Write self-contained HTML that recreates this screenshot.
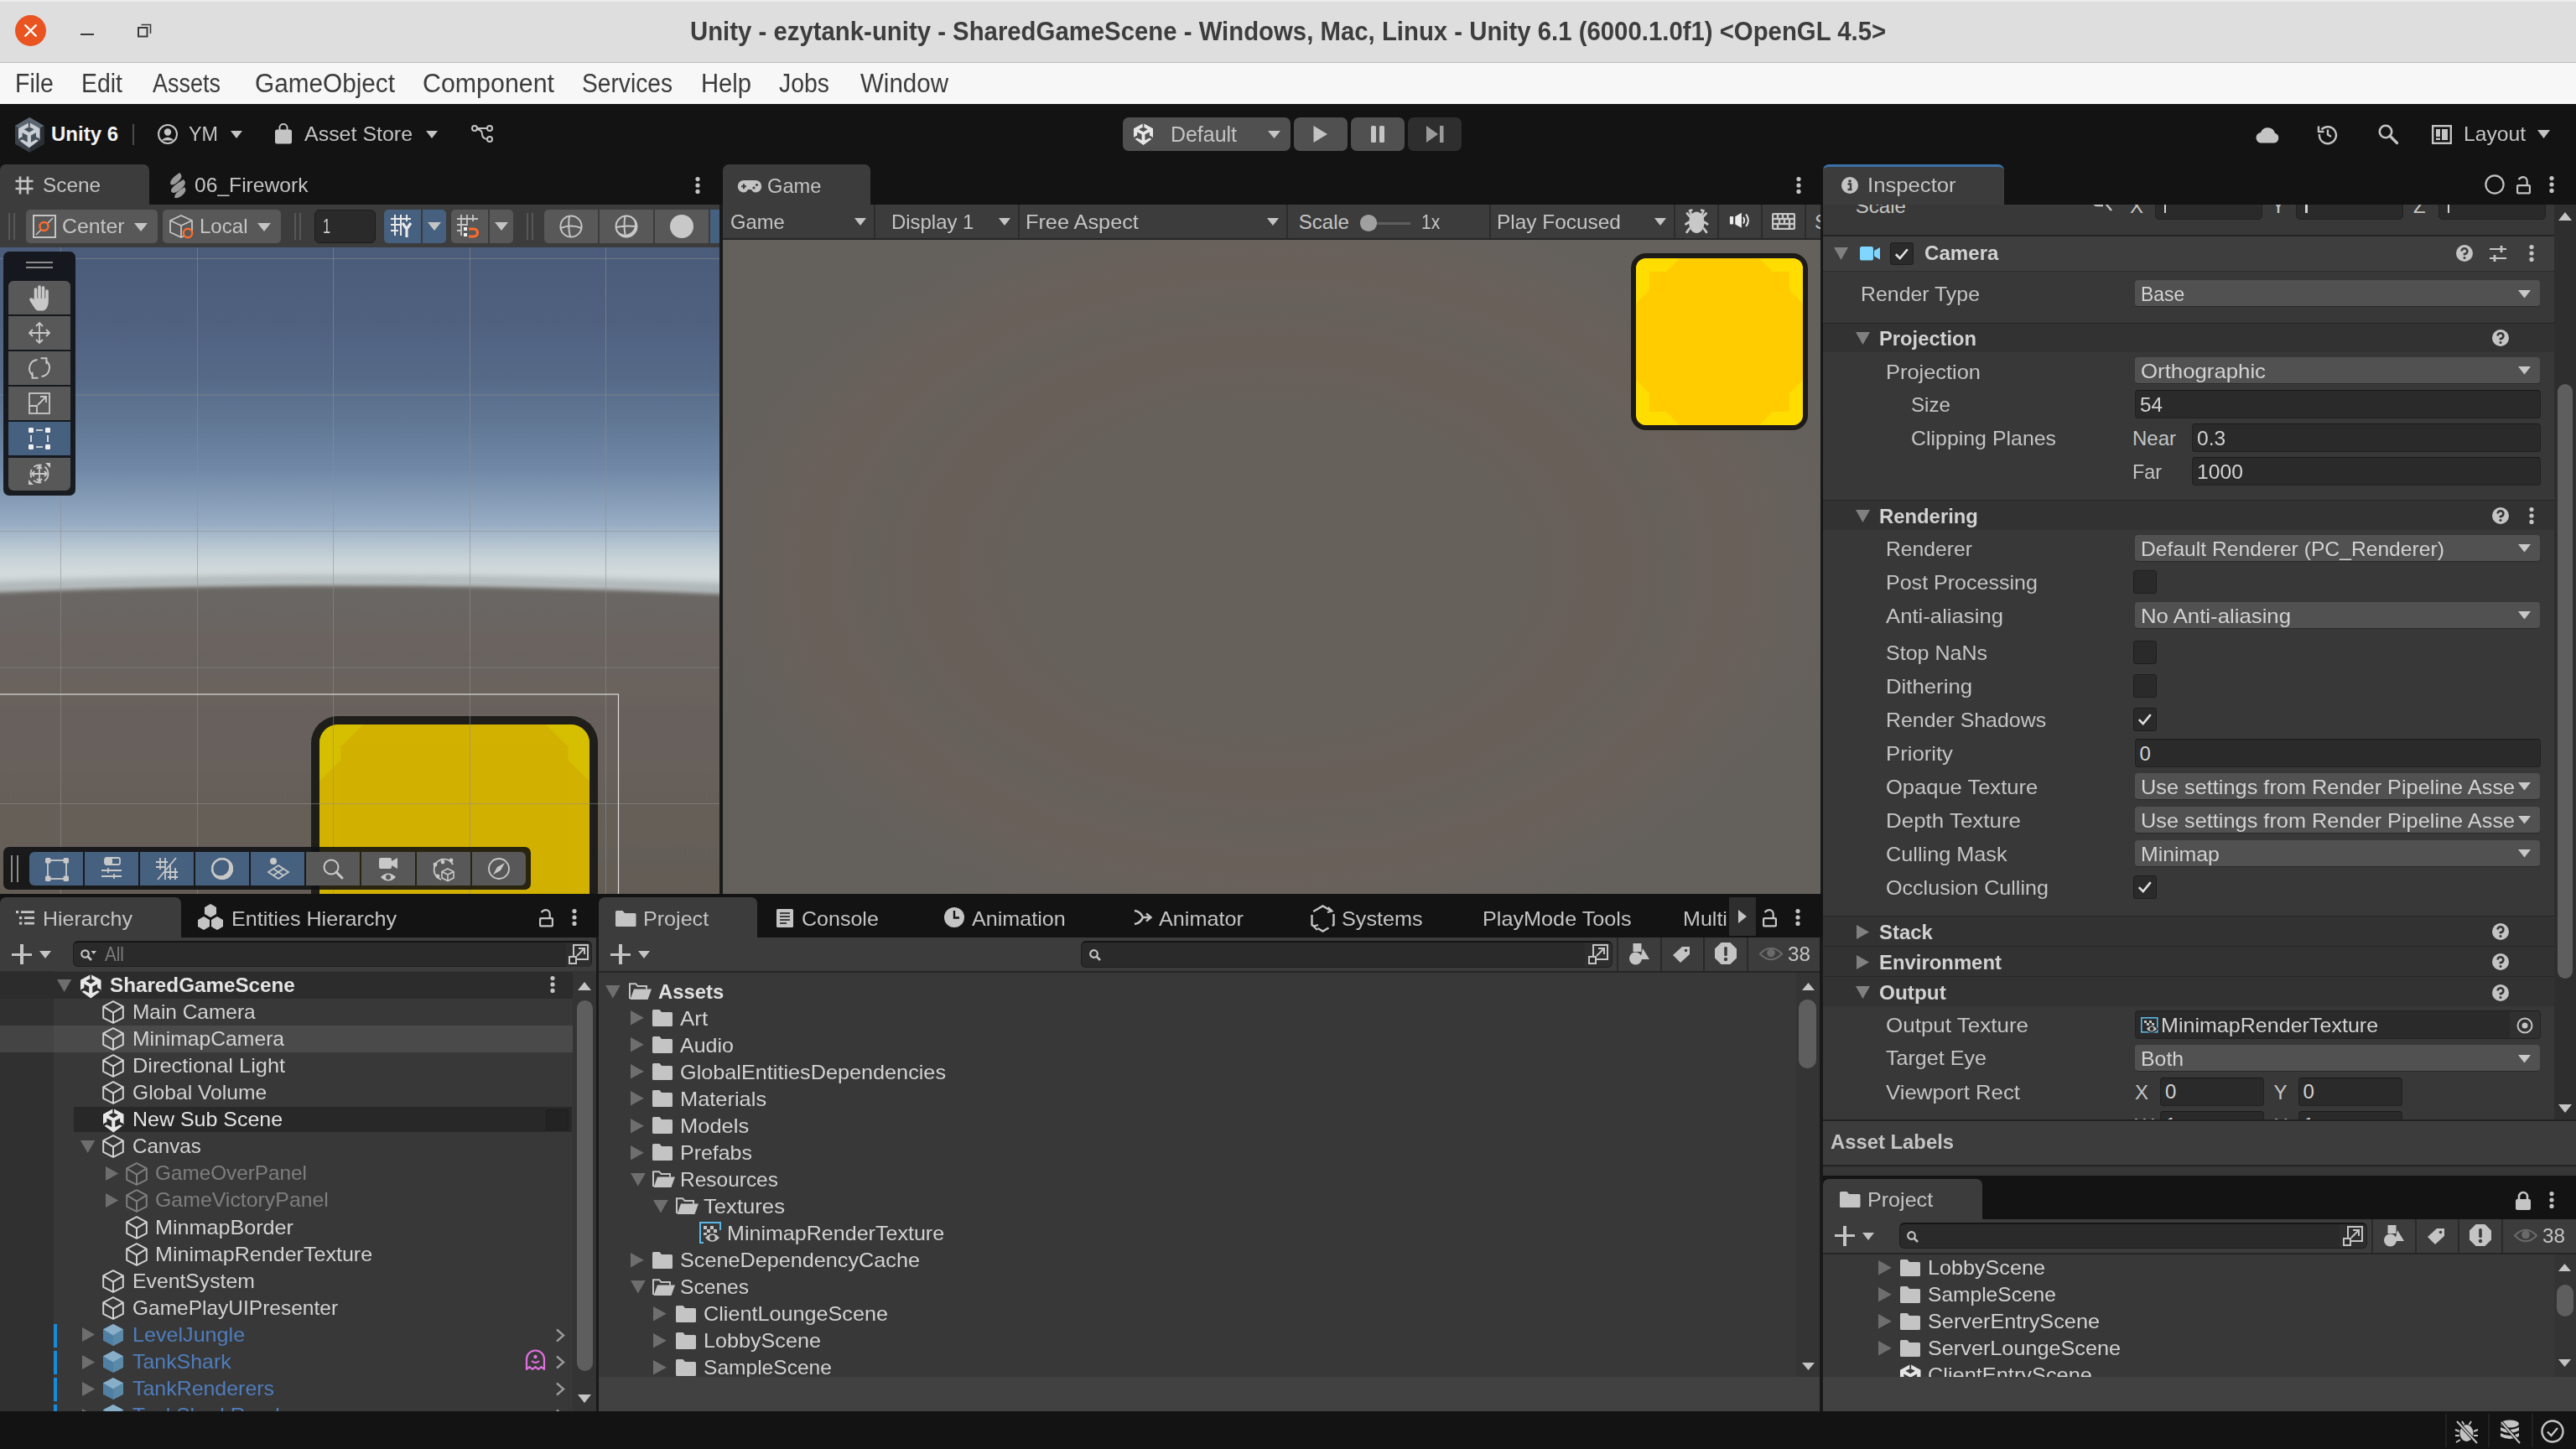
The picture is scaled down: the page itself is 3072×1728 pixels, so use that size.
<!DOCTYPE html>
<html><head><meta charset="utf-8">
<style>
*{box-sizing:border-box;margin:0;padding:0}
html,body{width:3072px;height:1728px;overflow:hidden;background:#131313;font-family:"Liberation Sans",sans-serif;color:#c8c8c8;position:relative}
.a{position:absolute}
.t{position:absolute;white-space:nowrap;line-height:1}
svg{position:absolute;overflow:visible}
</style></head><body>
<div class="a" style="left:0.0px;top:0.0px;width:3072.0px;height:74.5px;background:#dedede;border-top:2px solid #ececec;border-bottom:1.5px solid #bdbdbd"></div>
<div class="a" style="left:18.0px;top:18.0px;width:37.0px;height:37.0px;background:#e95420;border-radius:50%;"></div>
<svg style="left:18px;top:18px;" width="37" height="37" viewBox="0 0 37 37"><path d="M11.5 11.5 L25.5 25.5 M25.5 11.5 L11.5 25.5" stroke="#fff" stroke-width="2.4"/></svg>
<div class="a" style="left:96.0px;top:40.0px;width:16.0px;height:2.0px;background:#3a3a3a;"></div>
<svg style="left:160px;top:24px;" width="30" height="24" viewBox="0 0 30 24"><rect x="5" y="9" width="10.5" height="10.5" fill="none" stroke="#3a3a3a" stroke-width="2"/><path d="M8.5 5.5 H19.5 V16" fill="none" stroke="#3a3a3a" stroke-width="1.6"/></svg>
<div class="t" style="left:823.0px;top:22.1px;font-size:30.5px;color:#3d3d3d;font-weight:bold;transform:scaleX(0.9622);transform-origin:0.00px 0;">Unity - ezytank-unity - SharedGameScene - Windows, Mac, Linux - Unity 6.1 (6000.1.0f1) &lt;OpenGL 4.5&gt;</div>
<div class="a" style="left:0.0px;top:74.5px;width:3072.0px;height:49.5px;background:#f7f7f7;"></div>
<div class="t" style="left:17.5px;top:83.9px;font-size:31px;color:#3c3c3c;transform:scaleX(0.9200);transform-origin:0.00px 0;">File</div>
<div class="t" style="left:97.0px;top:83.9px;font-size:31px;color:#3c3c3c;transform:scaleX(0.9159);transform-origin:0.00px 0;">Edit</div>
<div class="t" style="left:182.0px;top:83.9px;font-size:31px;color:#3c3c3c;transform:scaleX(0.8710);transform-origin:0.00px 0;">Assets</div>
<div class="t" style="left:304.0px;top:83.9px;font-size:31px;color:#3c3c3c;transform:scaleX(0.9598);transform-origin:0.00px 0;">GameObject</div>
<div class="t" style="left:504.0px;top:83.9px;font-size:31px;color:#3c3c3c;transform:scaleX(0.9797);transform-origin:0.00px 0;">Component</div>
<div class="t" style="left:694.0px;top:83.9px;font-size:31px;color:#3c3c3c;transform:scaleX(0.9095);transform-origin:0.00px 0;">Services</div>
<div class="t" style="left:836.0px;top:83.9px;font-size:31px;color:#3c3c3c;transform:scaleX(0.9412);transform-origin:0.00px 0;">Help</div>
<div class="t" style="left:929.0px;top:83.9px;font-size:31px;color:#3c3c3c;transform:scaleX(0.9160);transform-origin:0.00px 0;">Jobs</div>
<div class="t" style="left:1026.0px;top:83.9px;font-size:31px;color:#3c3c3c;transform:scaleX(0.9524);transform-origin:0.00px 0;">Window</div>
<div class="a" style="left:0.0px;top:124.0px;width:3072.0px;height:72.0px;background:#131313;"></div>
<svg style="left:17.9px;top:140.1px;" width="34.5" height="41.8" viewBox="0 0 34.5 41.8"><path d="M17.25 0 L34.5 10 V31.8 L17.25 41.8 L0 31.8 V10 Z" fill="#3a4149"/><path d="M17.25 0 L34.5 10 L17.25 20 L0 10 Z" fill="#5b6670"/><path d="M17.25 20 L34.5 10 V31.8 L17.25 41.8 Z" fill="#2a3036"/></svg>
<svg style="left:22.4px;top:146.2px;" width="25.6" height="30.2" viewBox="0 0 25.6 30.2"><g transform="scale(1.0449,1.0559)"><path d="M12.25 0 L24.5 6.8 V19.6 L12.25 28.6 L0 19.6 V6.8 Z" fill="#c9cdd4"/><rect x="11.35" y="-0.5" width="1.8" height="5.6" fill="#46505a"/><path d="M6.3 7.9 L12.25 4.9 L17.9 7.9 L12.25 11.2 Z" fill="#46505a"/><path d="M4.4 11.5 L10.2 14.6 V22.4 L4.4 19.2 L0.2 21.6 V18.4 L4.4 16 Z" fill="#46505a"/><path d="M20.1 11.5 L14.3 14.6 V22.4 L20.1 19.2 L24.3 21.6 V18.4 L20.1 16 Z" fill="#46505a"/></g></svg>
<div class="t" style="left:61.0px;top:147.9px;font-size:24px;color:#f2f2f2;font-weight:bold;transform:scaleX(1.0000);transform-origin:0.00px 0;">Unity 6</div>
<div class="a" style="left:158.0px;top:148.0px;width:2.0px;height:25.0px;background:#4a4a4a;"></div>
<svg style="left:188px;top:148px;" width="24" height="24" viewBox="0 0 24 24"><circle cx="12" cy="12" r="11" fill="none" stroke="#c4c4c4" stroke-width="2"/><circle cx="12" cy="9.5" r="4.2" fill="#c4c4c4"/><path d="M4.5 19.5 Q12 12 19.5 19.5" fill="#c4c4c4"/></svg>
<div class="t" style="left:225.0px;top:147.9px;font-size:24px;color:#c4c4c4;transform:scaleX(0.9722);transform-origin:0.00px 0;">YM</div>
<svg style="left:275.0px;top:156.0px;" width="14" height="9" viewBox="0 0 14 9"><path d="M0 0 H14 L7.0 9 Z" fill="#c4c4c4"/></svg>
<svg style="left:328px;top:148px;" width="20" height="24" viewBox="0 0 20 24"><path d="M5.5 7 V4 A4.5 4 0 0 1 14.5 4 V7" fill="none" stroke="#c4c4c4" stroke-width="2"/><rect x="0" y="6.5" width="20" height="17" rx="2.5" fill="#c4c4c4"/></svg>
<div class="t" style="left:363.4px;top:147.9px;font-size:24px;color:#c4c4c4;transform:scaleX(1.0403);transform-origin:0.00px 0;">Asset Store</div>
<svg style="left:508.0px;top:156.0px;" width="14" height="9" viewBox="0 0 14 9"><path d="M0 0 H14 L7.0 9 Z" fill="#c4c4c4"/></svg>
<svg style="left:562px;top:149px;" width="26" height="21" viewBox="0 0 26 21"><circle cx="4" cy="4" r="3" fill="none" stroke="#c4c4c4" stroke-width="2"/><circle cx="22" cy="4" r="3" fill="none" stroke="#c4c4c4" stroke-width="2"/><circle cx="22" cy="17" r="3" fill="none" stroke="#c4c4c4" stroke-width="2"/><path d="M7 4 H19 M7 5 Q13 6 13 11 Q13 16 19 17" fill="none" stroke="#c4c4c4" stroke-width="2"/></svg>
<div class="a" style="left:1339.0px;top:140.0px;width:200.0px;height:40.0px;background:#505050;border-radius:7px;"></div>
<svg style="left:1352px;top:146.7px;" width="23" height="26" viewBox="0 0 23 26"><g transform="scale(0.9388,0.9091)"><path d="M12.25 0 L24.5 6.8 V19.6 L12.25 28.6 L0 19.6 V6.8 Z" fill="#e6e6e6"/><rect x="11.35" y="-0.5" width="1.8" height="5.6" fill="#505050"/><path d="M6.3 7.9 L12.25 4.9 L17.9 7.9 L12.25 11.2 Z" fill="#505050"/><path d="M4.4 11.5 L10.2 14.6 V22.4 L4.4 19.2 L0.2 21.6 V18.4 L4.4 16 Z" fill="#505050"/><path d="M20.1 11.5 L14.3 14.6 V22.4 L20.1 19.2 L24.3 21.6 V18.4 L20.1 16 Z" fill="#505050"/></g></svg>
<div class="t" style="left:1396.3px;top:147.8px;font-size:25px;color:#c4c4c4;transform:scaleX(0.9968);transform-origin:0.00px 0;">Default</div>
<svg style="left:1511.5px;top:156.0px;" width="15" height="9" viewBox="0 0 15 9"><path d="M0 0 H15 L7.5 9 Z" fill="#c4c4c4"/></svg>
<div class="a" style="left:1543.0px;top:140.0px;width:64.0px;height:40.0px;background:#505050;border-radius:7px;"></div>
<svg style="left:1566px;top:150px;" width="18" height="20" viewBox="0 0 18 20"><path d="M0.5 0 V20 L17 10 Z" fill="#c4c4c4"/></svg>
<div class="a" style="left:1611.0px;top:140.0px;width:64.0px;height:40.0px;background:#505050;border-radius:7px;"></div>
<div class="a" style="left:1635.0px;top:150.0px;width:6.0px;height:20.0px;background:#c4c4c4;border-radius:1.5px;"></div>
<div class="a" style="left:1644.5px;top:150.0px;width:6.5px;height:20.0px;background:#c4c4c4;border-radius:1.5px;"></div>
<div class="a" style="left:1679.0px;top:140.0px;width:64.0px;height:40.0px;background:#2e2e2e;border-radius:7px;"></div>
<svg style="left:1701px;top:150px;" width="21" height="20" viewBox="0 0 21 20"><path d="M0 0 V20 L14 10 Z" fill="#9a9a9a"/><rect x="16" y="0" width="4.5" height="20" fill="#9a9a9a"/></svg>
<svg style="left:2690px;top:150px;" width="28" height="21" viewBox="0 0 28 21"><path d="M6 20.5 H22 A6 6 0 0 0 23 8.8 A9 9 0 0 0 6 8 A6.3 6.3 0 0 0 6 20.5 Z" fill="#c4c4c4"/></svg>
<svg style="left:2764px;top:148px;" width="24" height="24" viewBox="0 0 24 24"><path d="M4.5 6.5 A10 10 0 1 1 2 12" fill="none" stroke="#c4c4c4" stroke-width="2.4"/><path d="M1 2.5 V9 H7.5" fill="none" stroke="#c4c4c4" stroke-width="2.4"/><path d="M12 6.5 V12.5 L16 15" fill="none" stroke="#c4c4c4" stroke-width="2.4"/></svg>
<svg style="left:2836px;top:148px;" width="24" height="24" viewBox="0 0 24 24"><circle cx="9" cy="9" r="7.2" fill="none" stroke="#c4c4c4" stroke-width="2.6"/><path d="M14 14 L22.5 22.5" stroke="#c4c4c4" stroke-width="3.2" stroke-linecap="round"/></svg>
<svg style="left:2900px;top:149px;" width="24" height="23" viewBox="0 0 24 23"><rect x="1.2" y="1.2" width="21.6" height="20.6" fill="none" stroke="#c4c4c4" stroke-width="2.4"/><rect x="5" y="5" width="5" height="9" fill="#c4c4c4"/><rect x="12" y="5" width="7" height="13" fill="#c4c4c4"/><rect x="5" y="15.5" width="5" height="2.5" fill="#c4c4c4"/></svg>
<div class="t" style="left:2938.0px;top:148.3px;font-size:24px;color:#c4c4c4;transform:scaleX(1.0278);transform-origin:0.00px 0;">Layout</div>
<svg style="left:3026.0px;top:155.0px;" width="15" height="10" viewBox="0 0 15 10"><path d="M0 0 H15 L7.5 10 Z" fill="#c4c4c4"/></svg>
<div class="a" style="left:0.0px;top:196.0px;width:178.0px;height:48.0px;background:#3c3c3c;border-radius:7px 7px 0 0;"></div>
<svg style="left:18px;top:210px;" width="22" height="22" viewBox="0 0 22 22"><path d="M6 0.5 V21.5 M15 0.5 V21.5 M0.5 6 H21.5 M0.5 15 H21.5" stroke="#c4c4c4" stroke-width="2.6"/></svg>
<div class="t" style="left:51.0px;top:209.4px;font-size:24px;color:#c4c4c4;transform:scaleX(1.0147);transform-origin:0.00px 0;">Scene</div>
<svg style="left:200px;top:205px;" width="23" height="31" viewBox="0 0 23 31"><path d="M14 1 Q20 5 12 12 Q5 18 3 14 Q2 9 14 1 Z M19 9 Q24 14 15 21 Q6 28 4 23 Q3 18 19 9 Z M20 18 Q24 23 16 29 Q9 33 8 30 Q8 25 20 18 Z" fill="#9a9a9a"/></svg>
<div class="t" style="left:232.0px;top:209.4px;font-size:24px;color:#c4c4c4;transform:scaleX(1.0261);transform-origin:0.00px 0;">06_Firework</div>
<svg style="left:827.6px;top:208.7px;" width="8" height="24" viewBox="0 0 8 24"><circle cx="4" cy="4.6" r="2.6" fill="#c4c4c4"/><circle cx="4" cy="12" r="2.6" fill="#c4c4c4"/><circle cx="4" cy="19.4" r="2.6" fill="#c4c4c4"/></svg>
<div class="a" style="left:0.0px;top:244.0px;width:858.0px;height:51.0px;background:#3c3c3c;"></div>
<div class="a" style="left:9.5px;top:254.0px;width:2.0px;height:32.0px;background:#575757;"></div>
<div class="a" style="left:16.0px;top:254.0px;width:2.0px;height:32.0px;background:#575757;"></div>
<div class="a" style="left:31.0px;top:250.3px;width:157.0px;height:39.7px;background:#585858;border-radius:5px;"></div>
<svg style="left:39px;top:256px;" width="28" height="28" viewBox="0 0 28 28"><rect x="1" y="1" width="26" height="26" fill="none" stroke="#c4c4c4" stroke-width="2"/><path d="M4 24 L24 4" stroke="#c4c4c4" stroke-width="1.6"/><circle cx="13.5" cy="14" r="5" fill="#585858" stroke="#ff6a2a" stroke-width="2.4"/></svg>
<div class="t" style="left:74.2px;top:258.3px;font-size:24px;color:#c4c4c4;transform:scaleX(1.0361);transform-origin:0.00px 0;">Center</div>
<svg style="left:160.0px;top:265.6px;" width="16" height="10" viewBox="0 0 16 10"><path d="M0 0 H16 L8.0 10 Z" fill="#c4c4c4"/></svg>
<div class="a" style="left:194.0px;top:250.3px;width:141.0px;height:39.7px;background:#585858;border-radius:5px;"></div>
<svg style="left:202px;top:255.5px;" width="29" height="29" viewBox="0 0 29 29"><path d="M14 1 L27 7 V21 L14 27 L1 21 V7 Z M1 7 L14 13 L27 7 M14 13 V27" fill="none" stroke="#c4c4c4" stroke-width="1.8" stroke-linejoin="round"/><circle cx="22" cy="22" r="5.2" fill="#585858" stroke="#ff6a2a" stroke-width="2.4"/></svg>
<div class="t" style="left:237.6px;top:258.3px;font-size:24px;color:#c4c4c4;transform:scaleX(1.0017);transform-origin:0.00px 0;">Local</div>
<svg style="left:307.0px;top:265.6px;" width="16" height="10" viewBox="0 0 16 10"><path d="M0 0 H16 L8.0 10 Z" fill="#c4c4c4"/></svg>
<div class="a" style="left:350.5px;top:254.0px;width:2.0px;height:32.0px;background:#575757;"></div>
<div class="a" style="left:357.0px;top:254.0px;width:2.0px;height:32.0px;background:#575757;"></div>
<div class="a" style="left:375.3px;top:250.3px;width:73.0px;height:39.3px;background:#2a2a2a;border-radius:6px;border:1.5px solid #1c1c1c"></div>
<div class="t" style="left:385.0px;top:258.3px;font-size:24px;color:#d0d0d0;transform:scaleX(0.6792);transform-origin:0.00px 0;">1</div>
<div class="a" style="left:458.0px;top:250.0px;width:44.0px;height:39.7px;background:#46607f;border-radius:5px 0 0 5px;"></div>
<div class="a" style="left:504.0px;top:250.0px;width:28.0px;height:39.7px;background:#46607f;border-radius:0 5px 5px 0;"></div>
<svg style="left:466px;top:256px;" width="28" height="28" viewBox="0 0 28 28"><path d="M5 0 V25 M12 0 V25 M19 0 V8 M0 5 H24 M0 12 H13 M0 19 H9" stroke="#e8e8e8" stroke-width="2"/><path d="M14 10 L19 17 L24 10 M19 17 V27" fill="none" stroke="#e8e8e8" stroke-width="3.2"/></svg>
<svg style="left:510.0px;top:265.0px;" width="16" height="10" viewBox="0 0 16 10"><path d="M0 0 H16 L8.0 10 Z" fill="#c4c4c4"/></svg>
<div class="a" style="left:538.0px;top:250.0px;width:44.0px;height:39.7px;background:#585858;border-radius:5px 0 0 5px;"></div>
<div class="a" style="left:584.0px;top:250.0px;width:28.0px;height:39.7px;background:#585858;border-radius:0 5px 5px 0;"></div>
<svg style="left:545px;top:256px;" width="28" height="28" viewBox="0 0 28 28"><path d="M5 0 V25 M12 0 V12 M19 0 V8 M0 5 H25 M0 12 H13 M0 19 H4" stroke="#c4c4c4" stroke-width="1.8"/><rect x="8" y="15" width="4" height="4" fill="#f0f0f0"/><rect x="8" y="22" width="4" height="4" fill="#f0f0f0"/><path d="M14 17 H20 A4.5 4.5 0 0 1 20 26 H14" fill="none" stroke="#ff6a2a" stroke-width="3.2"/></svg>
<svg style="left:590.0px;top:265.0px;" width="16" height="10" viewBox="0 0 16 10"><path d="M0 0 H16 L8.0 10 Z" fill="#c4c4c4"/></svg>
<div class="a" style="left:628.0px;top:254.0px;width:2.0px;height:32.0px;background:#575757;"></div>
<div class="a" style="left:634.0px;top:254.0px;width:2.0px;height:32.0px;background:#575757;"></div>
<div class="a" style="left:649.0px;top:250.0px;width:64.0px;height:39.7px;background:#585858;border-radius:5px 0 0 5px;"></div>
<div class="a" style="left:715.0px;top:250.0px;width:64.0px;height:39.7px;background:#585858;"></div>
<div class="a" style="left:781.0px;top:250.0px;width:64.0px;height:39.7px;background:#585858;"></div>
<div class="a" style="left:847.0px;top:250.0px;width:11.0px;height:39.7px;background:#46607f;"></div>
<svg style="left:667px;top:256px;" width="28" height="28" viewBox="0 0 28 28"><circle cx="14" cy="14" r="12.6" fill="none" stroke="#c4c4c4" stroke-width="2"/><path d="M1.5 16 Q14 11 26.5 16 M12 1.5 Q10 14 13 26.5" fill="none" stroke="#c4c4c4" stroke-width="2"/></svg>
<svg style="left:733px;top:256px;" width="28" height="28" viewBox="0 0 28 28"><circle cx="14" cy="14" r="13.2" fill="#c8c8c8"/><circle cx="12.6" cy="12.2" r="11.4" fill="#585858"/><circle cx="14" cy="14" r="12.4" fill="none" stroke="#c8c8c8" stroke-width="2"/><path d="M1.8 15 Q12 12.5 24.5 14 M12.5 1.6 Q10.5 12 12.5 23.5" fill="none" stroke="#c8c8c8" stroke-width="2"/></svg>
<div class="a" style="left:799.0px;top:256.0px;width:28.0px;height:28.0px;background:#c8c8c8;border-radius:50%;"></div>
<div class="a" style="left:0;top:295px;width:858px;height:771px;overflow:hidden">
<div class="a" style="left:0.0px;top:0.0px;width:858.0px;height:771.0px;background:linear-gradient(180deg,#4b5c7a 0px,#506180 90px,#566a88 156px,#617895 210px,#7088a6 264px,#98adc4 331px,#b2c2cf 352px,#c8d3d8 372px,#d3dbdc 388px,#d0d8d9 398px,#c4cbcc 410px);"></div>
<svg style="left:0px;top:0px;" width="858" height="771" viewBox="0 0 858 771"><defs><filter id="bl" filterUnits="userSpaceOnUse" x="-50" y="300" width="958" height="520"><feGaussianBlur stdDeviation="2.6"/></filter><filter id="bl2" filterUnits="userSpaceOnUse" x="-50" y="300" width="958" height="200"><feGaussianBlur stdDeviation="4"/></filter><linearGradient id="gnd" x1="0" y1="0" x2="0" y2="1"><stop offset="0" stop-color="#6b6765"/><stop offset="0.3" stop-color="#69625d"/><stop offset="1" stop-color="#635c56"/></linearGradient></defs><path d="M-20 405 Q430 386 878 407" fill="none" stroke="#9ca2a3" stroke-width="9" filter="url(#bl2)" opacity="0.7"/><path d="M-20 412 Q430 393 878 414 V790 H-20 Z" fill="url(#gnd)" filter="url(#bl)"/></svg>
<div class="a" style="left:371.0px;top:559.0px;width:342.0px;height:260.0px;background:#d2b100;border-radius:32px 32px 0 0;border:10px solid #201e1a;border-bottom:none"></div>
<div class="a" style="left:381px;top:569px;width:322px;height:250px;border-radius:22px 22px 0 0;overflow:hidden">
<svg style="left:0px;top:0px;" width="322" height="250" viewBox="0 0 322 250"><path d="M0 0 H52 L26 26 V42 L0 68 Z" fill="#d6c400" fill-opacity="0.75"/><path d="M322 0 H270 L296 26 V42 L322 68 Z" fill="#d6c400" fill-opacity="0.75"/><rect x="25" y="25.5" width="272" height="225" fill="#d0b000" fill-opacity="0.5"/></svg>
</div>
<svg style="left:0px;top:0px;" width="858" height="771" viewBox="0 0 858 771"><rect x="72" y="0" width="1" height="771" fill="#8e8e8e" fill-opacity="0.55"/><rect x="235" y="0" width="1" height="771" fill="#8e8e8e" fill-opacity="0.55"/><rect x="397" y="0" width="1" height="771" fill="#8e8e8e" fill-opacity="0.55"/><rect x="560" y="0" width="1" height="771" fill="#8e8e8e" fill-opacity="0.55"/><rect x="722" y="0" width="1" height="771" fill="#8e8e8e" fill-opacity="0.55"/><rect x="0" y="13" width="858" height="1" fill="#8e8e8e" fill-opacity="0.55"/><rect x="0" y="175.5" width="858" height="1" fill="#8e8e8e" fill-opacity="0.55"/><rect x="0" y="338" width="858" height="1" fill="#8e8e8e" fill-opacity="0.55"/><rect x="0" y="500.5" width="858" height="1" fill="#8e8e8e" fill-opacity="0.55"/><rect x="0" y="663" width="858" height="1" fill="#8e8e8e" fill-opacity="0.55"/><rect x="-10" y="533" width="747.5" height="400" fill="none" stroke="#dcdcdc" stroke-width="1.2"/></svg>
<div class="a" style="left:4.0px;top:5.3px;width:86.0px;height:290.5px;background:rgba(16,18,22,0.92);border-radius:7px;"></div>
<div class="a" style="left:31.0px;top:17.0px;width:32.0px;height:2.0px;background:#8c8c8c;"></div>
<div class="a" style="left:31.0px;top:23.0px;width:32.0px;height:2.0px;background:#8c8c8c;"></div>
<div class="a" style="left:10.1px;top:40.0px;width:74.1px;height:39.6px;background:#585858;border-radius:6px 6px 0 0;"></div>
<div class="a" style="left:10.1px;top:82.0px;width:74.1px;height:39.7px;background:#585858;border-radius:0;"></div>
<div class="a" style="left:10.1px;top:124.2px;width:74.1px;height:39.6px;background:#585858;border-radius:0;"></div>
<div class="a" style="left:10.1px;top:166.3px;width:74.1px;height:39.6px;background:#585858;border-radius:0;"></div>
<div class="a" style="left:10.1px;top:208.4px;width:74.1px;height:39.6px;background:#46607f;border-radius:0;"></div>
<div class="a" style="left:10.1px;top:250.5px;width:74.1px;height:39.5px;background:#585858;border-radius:0 0 6px 6px;"></div>
<svg style="left:34px;top:46.80000000000001px;" width="26" height="26" viewBox="0 0 26 26"><g transform="translate(-1,-2.5)"><path d="M9.5 17 V5.5 M14 15 V2.5 M18.5 15 V3.5 M23 16 V7.5" stroke="#c8c8c8" stroke-width="3.6" stroke-linecap="round"/><path d="M7.6 16 H24.8 V21 Q24 29 19 31 H12 Q9 30 7 26 L2.5 19 Q1.5 16.5 3.8 15.8 Q5.5 15.5 7.6 18 Z" fill="#c8c8c8"/></g></svg>
<svg style="left:34px;top:88.85000000000002px;" width="26" height="26" viewBox="0 0 26 26"><path d="M13 1 V25 M1 13 H25 M9 5 L13 1 L17 5 M9 21 L13 25 L17 21 M5 9 L1 13 L5 17 M21 9 L25 13 L21 17" fill="none" stroke="#c8c8c8" stroke-width="1.8"/></svg>
<svg style="left:34px;top:131.0px;" width="26" height="26" viewBox="0 0 26 26"><path d="M10.5 3 A10.5 10.5 0 0 0 5.5 22 M15.5 23 A10.5 10.5 0 0 0 20.5 4" fill="none" stroke="#c8c8c8" stroke-width="1.9"/><path d="M14.5 1.2 H21.5 V8.2 M11.5 24.8 H4.5 V17.8" fill="none" stroke="#c8c8c8" stroke-width="1.9"/></svg>
<svg style="left:34px;top:173.10000000000002px;" width="26" height="26" viewBox="0 0 26 26"><rect x="1" y="1" width="24" height="24" fill="none" stroke="#c8c8c8" stroke-width="1.8"/><path d="M1 16 H10 V25 M11 15 L21 5 M14 5 H21 V12" fill="none" stroke="#c8c8c8" stroke-width="1.8"/></svg>
<svg style="left:34px;top:215.20000000000005px;" width="26" height="26" viewBox="0 0 26 26"><path d="M3 3 H23 V23 H3 Z" fill="none" stroke="#f0f0f0" stroke-width="1.7"/><rect x="0" y="0" width="6" height="6" rx="1.2" fill="#f0f0f0"/><rect x="20" y="0" width="6" height="6" rx="1.2" fill="#f0f0f0"/><rect x="0" y="20" width="6" height="6" rx="1.2" fill="#f0f0f0"/><rect x="20" y="20" width="6" height="6" rx="1.2" fill="#f0f0f0"/><rect x="6" y="1" width="3" height="4" fill="#46607f"/><rect x="17" y="1" width="3" height="4" fill="#46607f"/><rect x="6" y="21" width="3" height="4" fill="#46607f"/><rect x="17" y="21" width="3" height="4" fill="#46607f"/><rect x="1" y="6" width="4" height="3" fill="#46607f"/><rect x="1" y="17" width="4" height="3" fill="#46607f"/><rect x="21" y="6" width="4" height="3" fill="#46607f"/><rect x="21" y="17" width="4" height="3" fill="#46607f"/></svg>
<svg style="left:34px;top:257.25px;" width="26" height="26" viewBox="0 0 26 26"><circle cx="13" cy="13" r="10.5" fill="none" stroke="#c8c8c8" stroke-width="1.8" stroke-dasharray="10 4"/><path d="M13 4 V22 M4 13 H22 M10 7 L13 4 L16 7 M10 19 L13 22 L16 19 M7 10 L4 13 L7 16 M19 10 L22 13 L19 16" fill="none" stroke="#c8c8c8" stroke-width="1.8"/><path d="M20 0 H26 V6 Z M0 20 V26 H6 Z" fill="#c8c8c8"/></svg>
<div class="a" style="left:4.3px;top:715.0px;width:628.3px;height:51.4px;background:rgba(16,16,18,0.88);border-radius:7px;"></div>
<div class="a" style="left:13.0px;top:725.0px;width:2.0px;height:32.0px;background:#8a8a8a;"></div>
<div class="a" style="left:20.0px;top:725.0px;width:2.0px;height:32.0px;background:#8a8a8a;"></div>
<div class="a" style="left:35.0px;top:721.0px;width:64.0px;height:40.0px;background:#46607f;border-radius:6px 0 0 6px;"></div>
<div class="a" style="left:101.0px;top:721.0px;width:64.0px;height:40.0px;background:#46607f;border-radius:0;"></div>
<div class="a" style="left:167.0px;top:721.0px;width:64.0px;height:40.0px;background:#46607f;border-radius:0;"></div>
<div class="a" style="left:233.0px;top:721.0px;width:64.0px;height:40.0px;background:#46607f;border-radius:0;"></div>
<div class="a" style="left:299.0px;top:721.0px;width:64.0px;height:40.0px;background:#46607f;border-radius:0;"></div>
<div class="a" style="left:365.0px;top:721.0px;width:64.0px;height:40.0px;background:#585858;border-radius:0;"></div>
<div class="a" style="left:431.0px;top:721.0px;width:64.0px;height:40.0px;background:#585858;border-radius:0;"></div>
<div class="a" style="left:497.0px;top:721.0px;width:64.0px;height:40.0px;background:#585858;border-radius:0;"></div>
<div class="a" style="left:563.0px;top:721.0px;width:64.0px;height:40.0px;background:#585858;border-radius:0 6px 6px 0;"></div>
<svg style="left:54.0px;top:728px;" width="26" height="26" viewBox="0 0 26 26"><rect x="3" y="3" width="22" height="22" fill="none" stroke="#c8c8c8" stroke-width="1.8"/><rect x="0" y="0" width="6.5" height="6.5" rx="1.5" fill="#c8c8c8"/><rect x="21.5" y="0" width="6.5" height="6.5" rx="1.5" fill="#c8c8c8"/><rect x="0" y="21.5" width="6.5" height="6.5" rx="1.5" fill="#c8c8c8"/><rect x="21.5" y="21.5" width="6.5" height="6.5" rx="1.5" fill="#c8c8c8"/></svg>
<svg style="left:120.0px;top:728px;" width="26" height="26" viewBox="0 0 26 26"><rect x="5" y="0" width="18" height="8" rx="2" fill="none" stroke="#c8c8c8" stroke-width="1.8"/><rect x="5" y="0" width="9" height="8" rx="2" fill="#c8c8c8"/><path d="M1 15 H25 M1 22 H25 M9 12 V18 M16 19 V25" stroke="#c8c8c8" stroke-width="1.8"/></svg>
<svg style="left:186.0px;top:728px;" width="26" height="26" viewBox="0 0 26 26"><path d="M5 0 V14 M11 0 V26 M17 8 V26 M23 12 V26 M0 5 H14 M0 11 H10 M12 17 H26 M14 23 H26 M2 26 L24 0" stroke="#c8c8c8" stroke-width="1.8"/></svg>
<svg style="left:252.0px;top:728px;" width="26" height="26" viewBox="0 0 26 26"><circle cx="13" cy="13" r="13" fill="#c8c8c8"/><circle cx="10.8" cy="10.8" r="10.4" fill="#46607f"/><circle cx="13" cy="13" r="11.8" fill="none" stroke="#c8c8c8" stroke-width="2.4"/></svg>
<svg style="left:318.0px;top:728px;" width="26" height="26" viewBox="0 0 26 26"><circle cx="8" cy="4" r="4" fill="#c8c8c8"/><path d="M14 9 L26 17 L14 25 L2 17 Z M8 13 L20 21 M20 13 L8 21" fill="none" stroke="#c8c8c8" stroke-width="1.8"/></svg>
<svg style="left:384.0px;top:728px;" width="26" height="26" viewBox="0 0 26 26"><circle cx="11" cy="11" r="8.5" fill="none" stroke="#c8c8c8" stroke-width="2"/><path d="M17 17 L24 24" stroke="#c8c8c8" stroke-width="3" stroke-linecap="round"/></svg>
<svg style="left:450.0px;top:728px;" width="26" height="26" viewBox="0 0 26 26"><rect x="2" y="0" width="15" height="13" rx="2" fill="#c8c8c8"/><path d="M17 4 L24 0 V13 L17 9 Z" fill="#c8c8c8"/><path d="M4 23 Q13 14 22 23 Q13 32 4 23 Z" fill="#c8c8c8"/><circle cx="13" cy="23" r="3" fill="#585858"/></svg>
<svg style="left:516.0px;top:728px;" width="26" height="26" viewBox="0 0 26 26"><path d="M2 18 Q0 6 10 2 Q20 0 24 8" fill="none" stroke="#c8c8c8" stroke-width="1.8"/><path d="M2 18 Q5 24 10 26" fill="none" stroke="#c8c8c8" stroke-width="1.8"/><circle cx="3" cy="8" r="2.4" fill="#c8c8c8"/><circle cx="12" cy="5" r="2.4" fill="#c8c8c8"/><circle cx="22" cy="3" r="2.4" fill="#c8c8c8"/><circle cx="6" cy="22" r="2.4" fill="#c8c8c8"/><path d="M18 13 L25 16.5 V24 L18 27.5 L11 24 V16.5 Z M11 16.5 L18 20 L25 16.5 M18 20 V27.5" fill="none" stroke="#c8c8c8" stroke-width="1.6"/></svg>
<svg style="left:582.0px;top:728px;" width="26" height="26" viewBox="0 0 26 26"><circle cx="13" cy="13" r="12" fill="none" stroke="#c8c8c8" stroke-width="1.8"/><path d="M20 6 L15 15 L6 20 L11 11 Z" fill="#c8c8c8"/></svg>
</div>
<div class="a" style="left:858.0px;top:244.0px;width:4.0px;height:822.0px;background:#191919;"></div>
<div class="a" style="left:862.0px;top:196.0px;width:176.0px;height:48.0px;background:#3c3c3c;border-radius:7px 7px 0 0;"></div>
<svg style="left:880px;top:215px;" width="28" height="15" viewBox="0 0 28 15"><path d="M7 0 H21 A7 7 0 0 1 21 14.5 Q18 14.5 16 11 H12 Q10 14.5 7 14.5 A7 7 0 0 1 7 0 Z" fill="#c4c4c4"/><path d="M4 7.2 H10 M7 4.2 V10.2" stroke="#3c3c3c" stroke-width="2"/><circle cx="19" cy="9" r="1.6" fill="#3c3c3c"/><circle cx="22.5" cy="5.5" r="1.6" fill="#3c3c3c"/></svg>
<div class="t" style="left:914.7px;top:209.8px;font-size:24px;color:#c4c4c4;transform:scaleX(0.9854);transform-origin:0.00px 0;">Game</div>
<svg style="left:2140.6px;top:208.7px;" width="8" height="24" viewBox="0 0 8 24"><circle cx="4" cy="4.6" r="2.6" fill="#c4c4c4"/><circle cx="4" cy="12" r="2.6" fill="#c4c4c4"/><circle cx="4" cy="19.4" r="2.6" fill="#c4c4c4"/></svg>
<div class="a" style="left:862.0px;top:244.0px;width:1310.0px;height:41.0px;background:#3c3c3c;"></div>
<div class="a" style="left:862.0px;top:284.0px;width:1310.0px;height:1.5px;background:#262626;"></div>
<div class="a" style="left:1042.0px;top:244.0px;width:2.0px;height:40.0px;background:#2c2c2c;"></div>
<div class="a" style="left:1213.7px;top:244.0px;width:2.0px;height:40.0px;background:#2c2c2c;"></div>
<div class="a" style="left:1533.8px;top:244.0px;width:2.0px;height:40.0px;background:#2c2c2c;"></div>
<div class="a" style="left:1775.7px;top:244.0px;width:2.0px;height:40.0px;background:#2c2c2c;"></div>
<div class="a" style="left:1995.8px;top:244.0px;width:2.0px;height:40.0px;background:#2c2c2c;"></div>
<div class="a" style="left:2047.6px;top:244.0px;width:2.0px;height:40.0px;background:#2c2c2c;"></div>
<div class="a" style="left:2099.6px;top:244.0px;width:2.0px;height:40.0px;background:#2c2c2c;"></div>
<div class="a" style="left:2151.6px;top:244.0px;width:2.0px;height:40.0px;background:#2c2c2c;"></div>
<div class="t" style="left:871.0px;top:252.5px;font-size:24px;color:#c4c4c4;transform:scaleX(0.9900);transform-origin:0.00px 0;">Game</div>
<svg style="left:1018.8px;top:260.1px;" width="14" height="9" viewBox="0 0 14 9"><path d="M0 0 H14 L7.0 9 Z" fill="#c4c4c4"/></svg>
<div class="t" style="left:1063.3px;top:252.5px;font-size:24px;color:#c4c4c4;transform:scaleX(0.9965);transform-origin:0.00px 0;">Display 1</div>
<svg style="left:1190.8px;top:260.1px;" width="14" height="9" viewBox="0 0 14 9"><path d="M0 0 H14 L7.0 9 Z" fill="#c4c4c4"/></svg>
<div class="t" style="left:1222.8px;top:252.5px;font-size:24px;color:#c4c4c4;transform:scaleX(1.0531);transform-origin:0.00px 0;">Free Aspect</div>
<svg style="left:1511.0px;top:260.1px;" width="14" height="9" viewBox="0 0 14 9"><path d="M0 0 H14 L7.0 9 Z" fill="#c4c4c4"/></svg>
<div class="t" style="left:1548.8px;top:252.6px;font-size:24px;color:#c4c4c4;transform:scaleX(1.0000);transform-origin:0.00px 0;">Scale</div>
<div class="a" style="left:1632.0px;top:264.5px;width:50.0px;height:3.0px;background:#5e5e5e;"></div>
<div class="a" style="left:1622.0px;top:256.4px;width:20.0px;height:19.2px;background:#a0a0a0;border-radius:50%;"></div>
<div class="t" style="left:1694.8px;top:252.6px;font-size:24px;color:#c4c4c4;transform:scaleX(0.8792);transform-origin:0.00px 0;">1x</div>
<div class="t" style="left:1785.0px;top:252.6px;font-size:24px;color:#c4c4c4;transform:scaleX(1.0172);transform-origin:0.00px 0;">Play Focused</div>
<svg style="left:1972.7px;top:260.1px;" width="14" height="9" viewBox="0 0 14 9"><path d="M0 0 H14 L7.0 9 Z" fill="#c4c4c4"/></svg>
<svg style="left:2009px;top:249px;" width="29" height="30" viewBox="0 0 29 30"><ellipse cx="14.3" cy="16.3" rx="9.3" ry="12.8" fill="#c8c8c8"/><path d="M8.5 8 L6 2.3 L9.5 1.5 M20 8 L22.5 2.3 L19 1.5" fill="none" stroke="#c8c8c8" stroke-width="2.6" stroke-linejoin="round"/><path d="M6.6 9.5 L3 5.5 M22 9.5 L25.6 5.5 M5 16 L1.5 18.2 M23.6 16 L27.1 18.2 M5.8 23.5 L2.6 27.8 M22.8 23.5 L26 27.8" fill="none" stroke="#c8c8c8" stroke-width="2.8" stroke-linecap="round"/></svg>
<svg style="left:2062px;top:253px;" width="26" height="20" viewBox="0 0 26 20"><rect x="0.9" y="5" width="4.2" height="9.6" rx="1" fill="#ececec"/><path d="M7.3 5.2 L14.9 0.7 V18.8 L7.3 14.4 Z" fill="#ececec"/><path d="M17 6 Q19.3 9.8 17 13.5" fill="none" stroke="#ececec" stroke-width="1.9"/><path d="M20.2 2.5 Q25.5 9.8 20.2 17" fill="none" stroke="#ececec" stroke-width="1.9"/></svg>
<svg style="left:2113px;top:254px;" width="28" height="20" viewBox="0 0 28 20"><rect x="0" y="0" width="28" height="20" rx="2" fill="#c8c8c8"/><g fill="#3c3c3c"><rect x="2.2" y="2.2" width="3.6" height="3.6"/><rect x="8.2" y="2.2" width="3.6" height="3.6"/><rect x="14.2" y="2.2" width="3.6" height="3.6"/><rect x="20.2" y="2.2" width="5.6" height="3.6"/><rect x="2.2" y="8.2" width="5.6" height="3.6"/><rect x="10.2" y="8.2" width="3.6" height="3.6"/><rect x="16.2" y="8.2" width="3.6" height="3.6"/><rect x="22.2" y="8.2" width="3.6" height="3.6"/><rect x="2.2" y="14.2" width="3.6" height="3.6"/><rect x="8.2" y="14.2" width="11.6" height="3.6"/><rect x="22.2" y="14.2" width="3.6" height="3.6"/></g></svg>
<div class="a" style="left:2160px;top:244px;width:12px;height:40px;overflow:hidden"><div class="t" style="left:4px;top:8.6px;font-size:24px;color:#c4c4c4">S</div></div>
<div class="a" style="left:862.0px;top:285.5px;width:1310.0px;height:780.5px;background:radial-gradient(ellipse 720px 470px at 655px 390px,#66615b 0%,#67615b 42%,#695f59 56%,#67615b 66%,#6a605a 76%,#66615c 88%,#64605b 100%);"></div>
<div class="a" style="left:1945.0px;top:302.0px;width:211.0px;height:211.0px;background:#ffcc00;border-radius:18px;border:6px solid #1c1b19"></div>
<svg style="left:1951px;top:308px;" width="199" height="199" viewBox="0 0 199 199"><path d="M0 14 Q0 0 14 0 H52 L36 16 H16 V38 L0 54 Z" fill="#ffdd00"/><path d="M199 14 Q199 0 185 0 H147 L163 16 H183 V38 L199 54 Z" fill="#ffdd00"/><path d="M0 185 Q0 199 14 199 H52 L36 183 H16 V161 L0 145 Z" fill="#ffdd00"/><path d="M199 185 Q199 199 185 199 H147 L163 183 H183 V161 L199 145 Z" fill="#ffdd00"/></svg>
<div class="a" style="left:2171.0px;top:244.0px;width:2.0px;height:822.0px;background:#191919;"></div>
<div class="a" style="left:2174.0px;top:196.0px;width:216.0px;height:48.0px;background:#3c3c3c;border-radius:7px 7px 0 0;border-top:3px solid #3a72a8"></div>
<svg style="left:2196px;top:211px;" width="20" height="20" viewBox="0 0 20 20"><circle cx="10" cy="10" r="10" fill="#c4c4c4"/><circle cx="10" cy="5" r="1.8" fill="#3c3c3c"/><path d="M7.5 8.5 H11 V15 H12.5 M7.5 15 H12.5" stroke="#3c3c3c" stroke-width="2.4" fill="none"/></svg>
<div class="t" style="left:2226.8px;top:209.2px;font-size:24px;color:#c4c4c4;transform:scaleX(1.0704);transform-origin:0.00px 0;">Inspector</div>
<svg style="left:2963px;top:208px;" width="24" height="24" viewBox="0 0 24 24"><circle cx="12" cy="12" r="10.6" fill="none" stroke="#c4c4c4" stroke-width="2.2"/></svg>
<svg style="left:3001px;top:210px;" width="18" height="22" viewBox="0 0 18 22"><path d="M2.6 4.2 Q4.6 1.1 8 1.1 A4.7 4.7 0 0 1 12.7 5.8 V10.5" fill="none" stroke="#c4c4c4" stroke-width="2.2"/><rect x="1.1" y="11.1" width="14.8" height="9.2" rx="0.8" fill="none" stroke="#c4c4c4" stroke-width="2.2"/></svg>
<svg style="left:3039px;top:208px;" width="8" height="24" viewBox="0 0 8 24"><circle cx="4" cy="4.6" r="2.6" fill="#c4c4c4"/><circle cx="4" cy="12" r="2.6" fill="#c4c4c4"/><circle cx="4" cy="19.4" r="2.6" fill="#c4c4c4"/></svg>
<div class="a" style="left:2174px;top:244px;width:872px;height:1091px;overflow:hidden;background:#383838">
</div>
<div class="a" style="left:2174.0px;top:244.0px;width:872.0px;height:1091.0px;background:#383838;"></div>
<div class="a" style="left:0;top:0;width:3072px;height:1335px;clip-path:inset(244px 0 0 2174px)">
<div class="t" style="left:2212.8px;top:233.6px;font-size:24px;color:#c4c4c4;transform:scaleX(1.0000);transform-origin:0.00px 0;">Scale</div>
<svg style="left:2496px;top:232px;" width="26" height="24" viewBox="0 0 26 24"><path d="M9 3 H5 Q1 3 1 8 Q1 13 5 13 H12" fill="none" stroke="#c4c4c4" stroke-width="2.6"/><path d="M14 3 H19" fill="none" stroke="#c4c4c4" stroke-width="2.6"/><path d="M8 2 L22 19" stroke="#c4c4c4" stroke-width="2.4"/></svg>
<div class="t" style="left:2540.0px;top:233.6px;font-size:24px;color:#c4c4c4;">X</div>
<div class="a" style="left:2569.7px;top:227.5px;width:128.0px;height:34.0px;background:#2a2a2a;border-radius:5px;border:1px solid #212121"></div>
<div class="a" style="left:2580.7px;top:236.0px;width:2.6px;height:17.5px;background:#d2d2d2;"></div>
<div class="t" style="left:2709.0px;top:233.6px;font-size:24px;color:#c4c4c4;">Y</div>
<div class="a" style="left:2738.0px;top:227.5px;width:128.0px;height:34.0px;background:#2a2a2a;border-radius:5px;border:1px solid #212121"></div>
<div class="a" style="left:2749.0px;top:236.0px;width:2.6px;height:17.5px;background:#d2d2d2;"></div>
<div class="t" style="left:2878.0px;top:233.6px;font-size:24px;color:#c4c4c4;">Z</div>
<div class="a" style="left:2907.5px;top:227.5px;width:128.0px;height:34.0px;background:#2a2a2a;border-radius:5px;border:1px solid #212121"></div>
<div class="a" style="left:2918.5px;top:236.0px;width:2.6px;height:17.5px;background:#d2d2d2;"></div>
<div class="a" style="left:2174.0px;top:280.0px;width:872.0px;height:2.0px;background:#252525;"></div>
<div class="a" style="left:2174.0px;top:282.0px;width:872.0px;height:40.5px;background:#3e3e3e;"></div>
<div class="a" style="left:2174.0px;top:322.5px;width:872.0px;height:1.5px;background:#2e2e2e;"></div>
<svg style="left:2186.5px;top:295.0px;" width="17" height="15" viewBox="0 0 17 15"><path d="M0 0 H17 L8.5 15 Z" fill="#808080"/></svg>
<svg style="left:2218px;top:293.7px;" width="24" height="16.6" viewBox="0 0 24 16.6"><rect x="0" y="0" width="16" height="16.6" rx="2.2" fill="#80d6ff"/><path d="M17 5 L24 1 V15.6 L17 11.6 Z" fill="#80d6ff"/></svg>
<div class="a" style="left:2254.4px;top:288.5px;width:27.4px;height:27.4px;background:#2a2a2a;border-radius:3px;border:1px solid #1e1e1e"></div>
<svg style="left:2254.4px;top:288.5px;" width="27.4" height="27.4" viewBox="0 0 27.4 27.4"><path d="M6.85 14.248 L11.782 19.179999999999996 L20.823999999999998 8.219999999999999" fill="none" stroke="#e0e0e0" stroke-width="2.6"/></svg>
<div class="t" style="left:2294.9px;top:290.3px;font-size:24px;color:#d2d2d2;font-weight:bold;transform:scaleX(1.0040);transform-origin:0.00px 0;">Camera</div>
<svg style="left:2928.6px;top:292.4px;" width="20" height="20" viewBox="0 0 20 20"><circle cx="10" cy="10" r="10" fill="#c4c4c4"/><path d="M6.6 7.6 A3.4 3.4 0 1 1 10 11 V12.6" fill="none" stroke="#3e3e3e" stroke-width="2.6"/><circle cx="10" cy="15.6" r="1.5" fill="#3e3e3e"/></svg>
<svg style="left:2968.5px;top:292px;" width="20" height="21" viewBox="0 0 20 21"><path d="M3 0 V21 M10 0 V21 M17 0 V21" stroke="#c4c4c4" stroke-width="0"/><path d="M0 5 H20 M0 16 H20" stroke="#c4c4c4" stroke-width="2.2"/><path d="M14 1 V9 M6 12 V20" stroke="#c4c4c4" stroke-width="2.8"/></svg>
<svg style="left:3015px;top:290.4px;" width="8" height="24" viewBox="0 0 8 24"><circle cx="4" cy="4.6" r="2.6" fill="#c4c4c4"/><circle cx="4" cy="12" r="2.6" fill="#c4c4c4"/><circle cx="4" cy="19.4" r="2.6" fill="#c4c4c4"/></svg>
<div class="t" style="left:2219.3px;top:338.5px;font-size:24px;color:#c4c4c4;transform:scaleX(1.0365);transform-origin:0.00px 0;">Render Type</div>
<div class="a" style="left:2545.8px;top:334.3px;width:483.2px;height:32.0px;background:#515151;border-radius:4px;border-bottom:1px solid #2a2a2a"></div>
<div class="t" style="left:2553.0px;top:338.9px;font-size:24px;color:#d2d2d2;transform:scaleX(0.9534);transform-origin:0.00px 0;">Base</div>
<svg style="left:3003.0px;top:345.55px;" width="15" height="9.5" viewBox="0 0 15 9.5"><path d="M0 0 H15 L7.5 9.5 Z" fill="#c8c8c8"/></svg>
<div class="a" style="left:2174.0px;top:384.5px;width:872.0px;height:1.5px;background:#262626;"></div>
<div class="a" style="left:2174.0px;top:386.0px;width:872.0px;height:34.0px;background:#323232;"></div>
<svg style="left:2212.5px;top:396.0px;" width="17" height="15" viewBox="0 0 17 15"><path d="M0 0 H17 L8.5 15 Z" fill="#808080"/></svg>
<div class="t" style="left:2240.7px;top:392.2px;font-size:24px;color:#d2d2d2;font-weight:bold;transform:scaleX(0.9893);transform-origin:0.00px 0;">Projection</div>
<svg style="left:2972.3px;top:393.0px;" width="20" height="20" viewBox="0 0 20 20"><circle cx="10" cy="10" r="10" fill="#c4c4c4"/><path d="M6.6 7.6 A3.4 3.4 0 1 1 10 11 V12.6" fill="none" stroke="#323232" stroke-width="2.6"/><circle cx="10" cy="15.6" r="1.5" fill="#323232"/></svg>
<div class="t" style="left:2249.0px;top:431.6px;font-size:24px;color:#c4c4c4;transform:scaleX(1.0585);transform-origin:0.00px 0;">Projection</div>
<div class="a" style="left:2545.8px;top:426.0px;width:483.2px;height:32.0px;background:#515151;border-radius:4px;border-bottom:1px solid #2a2a2a"></div>
<div class="t" style="left:2553.0px;top:430.6px;font-size:24px;color:#d2d2d2;transform:scaleX(1.0739);transform-origin:0.00px 0;">Orthographic</div>
<svg style="left:3003.0px;top:437.25px;" width="15" height="9.5" viewBox="0 0 15 9.5"><path d="M0 0 H15 L7.5 9.5 Z" fill="#c8c8c8"/></svg>
<div class="t" style="left:2278.6px;top:471.1px;font-size:24px;color:#c4c4c4;transform:scaleX(1.0053);transform-origin:0.00px 0;">Size</div>
<div class="a" style="left:2545.5px;top:465.0px;width:484.5px;height:34.0px;background:#2a2a2a;border-radius:4px;border:1px solid #212121;border-top-color:#1a1a1a"></div>
<div class="t" style="left:2551.5px;top:470.6px;font-size:24px;color:#d2d2d2;transform:scaleX(1.0093);transform-origin:0.00px 0;">54</div>
<div class="t" style="left:2278.6px;top:511.1px;font-size:24px;color:#c4c4c4;transform:scaleX(1.0375);transform-origin:0.00px 0;">Clipping Planes</div>
<div class="t" style="left:2543.0px;top:511.1px;font-size:24px;color:#c4c4c4;transform:scaleX(1.0000);transform-origin:0.00px 0;">Near</div>
<div class="a" style="left:2614.0px;top:505.0px;width:416.0px;height:34.0px;background:#2a2a2a;border-radius:4px;border:1px solid #212121;border-top-color:#1a1a1a"></div>
<div class="t" style="left:2620.0px;top:510.6px;font-size:24px;color:#d2d2d2;transform:scaleX(1.0226);transform-origin:0.00px 0;">0.3</div>
<div class="t" style="left:2543.0px;top:550.6px;font-size:24px;color:#c4c4c4;transform:scaleX(0.9722);transform-origin:0.00px 0;">Far</div>
<div class="a" style="left:2614.0px;top:545.0px;width:416.0px;height:34.0px;background:#2a2a2a;border-radius:4px;border:1px solid #212121;border-top-color:#1a1a1a"></div>
<div class="t" style="left:2620.0px;top:550.6px;font-size:24px;color:#d2d2d2;transform:scaleX(1.0280);transform-origin:0.00px 0;">1000</div>
<div class="a" style="left:2174.0px;top:595.5px;width:872.0px;height:1.5px;background:#262626;"></div>
<div class="a" style="left:2174.0px;top:597.0px;width:872.0px;height:35.0px;background:#323232;"></div>
<svg style="left:2212.5px;top:607.5px;" width="17" height="15" viewBox="0 0 17 15"><path d="M0 0 H17 L8.5 15 Z" fill="#808080"/></svg>
<div class="t" style="left:2240.7px;top:603.6px;font-size:24px;color:#d2d2d2;font-weight:bold;transform:scaleX(0.9937);transform-origin:0.00px 0;">Rendering</div>
<svg style="left:2972.3px;top:604.5px;" width="20" height="20" viewBox="0 0 20 20"><circle cx="10" cy="10" r="10" fill="#c4c4c4"/><path d="M6.6 7.6 A3.4 3.4 0 1 1 10 11 V12.6" fill="none" stroke="#323232" stroke-width="2.6"/><circle cx="10" cy="15.6" r="1.5" fill="#323232"/></svg>
<svg style="left:3014.6px;top:602.5px;" width="8" height="24" viewBox="0 0 8 24"><circle cx="4" cy="4.6" r="2.6" fill="#c4c4c4"/><circle cx="4" cy="12" r="2.6" fill="#c4c4c4"/><circle cx="4" cy="19.4" r="2.6" fill="#c4c4c4"/></svg>
<div class="t" style="left:2249.0px;top:642.6px;font-size:24px;color:#c4c4c4;transform:scaleX(1.0300);transform-origin:0.00px 0;">Renderer</div>
<div class="a" style="left:2545.8px;top:638.0px;width:483.2px;height:32.0px;background:#515151;border-radius:4px;border-bottom:1px solid #2a2a2a"></div>
<div class="t" style="left:2553.0px;top:642.6px;font-size:24px;color:#d2d2d2;transform:scaleX(1.0277);transform-origin:0.00px 0;">Default Renderer (PC_Renderer)</div>
<svg style="left:3003.0px;top:649.25px;" width="15" height="9.5" viewBox="0 0 15 9.5"><path d="M0 0 H15 L7.5 9.5 Z" fill="#c8c8c8"/></svg>
<div class="t" style="left:2249.0px;top:682.6px;font-size:24px;color:#c4c4c4;transform:scaleX(1.0432);transform-origin:0.00px 0;">Post Processing</div>
<div class="a" style="left:2544.3px;top:680.4px;width:27.3px;height:27.3px;background:#2a2a2a;border-radius:3px;border:1px solid #1e1e1e"></div>
<div class="t" style="left:2249.0px;top:722.6px;font-size:24px;color:#c4c4c4;transform:scaleX(1.0707);transform-origin:0.00px 0;">Anti-aliasing</div>
<div class="a" style="left:2545.8px;top:718.0px;width:483.2px;height:32.0px;background:#515151;border-radius:4px;border-bottom:1px solid #2a2a2a"></div>
<div class="t" style="left:2553.0px;top:722.6px;font-size:24px;color:#d2d2d2;transform:scaleX(1.0735);transform-origin:0.00px 0;">No Anti-aliasing</div>
<svg style="left:3003.0px;top:729.25px;" width="15" height="9.5" viewBox="0 0 15 9.5"><path d="M0 0 H15 L7.5 9.5 Z" fill="#c8c8c8"/></svg>
<div class="t" style="left:2249.0px;top:766.6px;font-size:24px;color:#c4c4c4;transform:scaleX(1.0431);transform-origin:0.00px 0;">Stop NaNs</div>
<div class="a" style="left:2544.3px;top:764.4px;width:27.3px;height:27.3px;background:#2a2a2a;border-radius:3px;border:1px solid #1e1e1e"></div>
<div class="t" style="left:2249.0px;top:806.6px;font-size:24px;color:#c4c4c4;transform:scaleX(1.0729);transform-origin:0.00px 0;">Dithering</div>
<div class="a" style="left:2544.3px;top:804.4px;width:27.3px;height:27.3px;background:#2a2a2a;border-radius:3px;border:1px solid #1e1e1e"></div>
<div class="t" style="left:2249.0px;top:846.6px;font-size:24px;color:#c4c4c4;transform:scaleX(1.0380);transform-origin:0.00px 0;">Render Shadows</div>
<div class="a" style="left:2544.3px;top:844.4px;width:27.3px;height:27.3px;background:#2a2a2a;border-radius:3px;border:1px solid #1e1e1e"></div>
<svg style="left:2544.3px;top:844.4px;" width="27.3" height="27.3" viewBox="0 0 27.3 27.3"><path d="M6.825 14.196000000000002 L11.739 19.11 L20.748 8.19" fill="none" stroke="#e0e0e0" stroke-width="2.6"/></svg>
<div class="t" style="left:2249.0px;top:886.6px;font-size:24px;color:#c4c4c4;transform:scaleX(1.0702);transform-origin:0.00px 0;">Priority</div>
<div class="a" style="left:2545.5px;top:881.0px;width:484.5px;height:34.0px;background:#2a2a2a;border-radius:4px;border:1px solid #212121;border-top-color:#1a1a1a"></div>
<div class="t" style="left:2551.5px;top:886.6px;font-size:24px;color:#d2d2d2;">0</div>
<div class="t" style="left:2249.0px;top:926.6px;font-size:24px;color:#c4c4c4;transform:scaleX(1.0631);transform-origin:0.00px 0;">Opaque Texture</div>
<div class="a" style="left:2545.8px;top:922.0px;width:483.2px;height:32.0px;background:#515151;border-radius:4px;border-bottom:1px solid #2a2a2a"></div>
<div class="t" style="left:2553.0px;top:926.6px;font-size:24px;color:#d2d2d2;transform:scaleX(1.0550);transform-origin:0.00px 0;">Use settings from Render Pipeline Asse</div>
<svg style="left:3003.0px;top:933.25px;" width="15" height="9.5" viewBox="0 0 15 9.5"><path d="M0 0 H15 L7.5 9.5 Z" fill="#c8c8c8"/></svg>
<div class="t" style="left:2249.0px;top:966.6px;font-size:24px;color:#c4c4c4;transform:scaleX(1.0805);transform-origin:0.00px 0;">Depth Texture</div>
<div class="a" style="left:2545.8px;top:962.0px;width:483.2px;height:32.0px;background:#515151;border-radius:4px;border-bottom:1px solid #2a2a2a"></div>
<div class="t" style="left:2553.0px;top:966.6px;font-size:24px;color:#d2d2d2;transform:scaleX(1.0550);transform-origin:0.00px 0;">Use settings from Render Pipeline Asse</div>
<svg style="left:3003.0px;top:973.25px;" width="15" height="9.5" viewBox="0 0 15 9.5"><path d="M0 0 H15 L7.5 9.5 Z" fill="#c8c8c8"/></svg>
<div class="t" style="left:2249.0px;top:1006.6px;font-size:24px;color:#c4c4c4;transform:scaleX(1.0526);transform-origin:0.00px 0;">Culling Mask</div>
<div class="a" style="left:2545.8px;top:1002.0px;width:483.2px;height:32.0px;background:#515151;border-radius:4px;border-bottom:1px solid #2a2a2a"></div>
<div class="t" style="left:2553.0px;top:1006.6px;font-size:24px;color:#d2d2d2;transform:scaleX(1.0358);transform-origin:0.00px 0;">Minimap</div>
<svg style="left:3003.0px;top:1013.25px;" width="15" height="9.5" viewBox="0 0 15 9.5"><path d="M0 0 H15 L7.5 9.5 Z" fill="#c8c8c8"/></svg>
<div class="t" style="left:2249.0px;top:1046.6px;font-size:24px;color:#c4c4c4;transform:scaleX(1.0458);transform-origin:0.00px 0;">Occlusion Culling</div>
<div class="a" style="left:2544.3px;top:1044.4px;width:27.3px;height:27.3px;background:#2a2a2a;border-radius:3px;border:1px solid #1e1e1e"></div>
<svg style="left:2544.3px;top:1044.4px;" width="27.3" height="27.3" viewBox="0 0 27.3 27.3"><path d="M6.825 14.196000000000002 L11.739 19.11 L20.748 8.19" fill="none" stroke="#e0e0e0" stroke-width="2.6"/></svg>
<div class="a" style="left:2174.0px;top:1091.5px;width:872.0px;height:1.5px;background:#262626;"></div>
<div class="a" style="left:2174.0px;top:1093.0px;width:872.0px;height:35.0px;background:#323232;"></div>
<svg style="left:2213.5px;top:1102.5px;" width="15" height="17" viewBox="0 0 15 17"><path d="M0 0 V17 L15 8.5 Z" fill="#808080"/></svg>
<div class="t" style="left:2240.7px;top:1099.8px;font-size:24px;color:#d2d2d2;font-weight:bold;transform:scaleX(0.9961);transform-origin:0.00px 0;">Stack</div>
<svg style="left:2972.3px;top:1101px;" width="20" height="20" viewBox="0 0 20 20"><circle cx="10" cy="10" r="10" fill="#c4c4c4"/><path d="M6.6 7.6 A3.4 3.4 0 1 1 10 11 V12.6" fill="none" stroke="#323232" stroke-width="2.6"/><circle cx="10" cy="15.6" r="1.5" fill="#323232"/></svg>
<div class="a" style="left:2174.0px;top:1127.5px;width:872.0px;height:1.5px;background:#262626;"></div>
<div class="a" style="left:2174.0px;top:1129.0px;width:872.0px;height:35.0px;background:#323232;"></div>
<svg style="left:2213.5px;top:1138.5px;" width="15" height="17" viewBox="0 0 15 17"><path d="M0 0 V17 L15 8.5 Z" fill="#808080"/></svg>
<div class="t" style="left:2240.7px;top:1135.6px;font-size:24px;color:#d2d2d2;font-weight:bold;transform:scaleX(0.9949);transform-origin:0.00px 0;">Environment</div>
<svg style="left:2972.3px;top:1137px;" width="20" height="20" viewBox="0 0 20 20"><circle cx="10" cy="10" r="10" fill="#c4c4c4"/><path d="M6.6 7.6 A3.4 3.4 0 1 1 10 11 V12.6" fill="none" stroke="#323232" stroke-width="2.6"/><circle cx="10" cy="15.6" r="1.5" fill="#323232"/></svg>
<div class="a" style="left:2174.0px;top:1163.5px;width:872.0px;height:1.5px;background:#262626;"></div>
<div class="a" style="left:2174.0px;top:1165.0px;width:872.0px;height:35.0px;background:#323232;"></div>
<svg style="left:2212.5px;top:1175.5px;" width="17" height="15" viewBox="0 0 17 15"><path d="M0 0 H17 L8.5 15 Z" fill="#808080"/></svg>
<div class="t" style="left:2240.7px;top:1171.6px;font-size:24px;color:#d2d2d2;font-weight:bold;transform:scaleX(1.0159);transform-origin:0.00px 0;">Output</div>
<svg style="left:2972.3px;top:1173.5px;" width="20" height="20" viewBox="0 0 20 20"><circle cx="10" cy="10" r="10" fill="#c4c4c4"/><path d="M6.6 7.6 A3.4 3.4 0 1 1 10 11 V12.6" fill="none" stroke="#323232" stroke-width="2.6"/><circle cx="10" cy="15.6" r="1.5" fill="#323232"/></svg>
<div class="t" style="left:2249.0px;top:1210.6px;font-size:24px;color:#c4c4c4;transform:scaleX(1.0828);transform-origin:0.00px 0;">Output Texture</div>
<div class="a" style="left:2545.5px;top:1205.0px;width:484.5px;height:34.0px;background:#2a2a2a;border-radius:4px;border:1px solid #212121"></div>
<div class="a" style="left:2993.0px;top:1206.0px;width:36.0px;height:32.0px;background:#303030;border-radius:0 4px 4px 0;"></div>
<svg style="left:2553px;top:1213px;" width="21" height="19" viewBox="0 0 21 19"><rect x="0.8" y="0.8" width="19" height="17" fill="none" stroke="#5ab8e8" stroke-width="1.6"/><path d="M4 4 h3 v3 h-3 z M10 4 h3 v3 h-3 z M7 7 h3 v3 h-3 z M13 7 h3 v3 h-3 z" fill="#c4c4c4"/><path d="M6 14 Q13 6 20 14 Q13 22 6 14 Z" fill="#c4c4c4" stroke="#2a2a2a" stroke-width="1.2"/><circle cx="13" cy="14" r="2.4" fill="#2a2a2a"/></svg>
<div class="t" style="left:2577.0px;top:1210.6px;font-size:24px;color:#d2d2d2;transform:scaleX(1.0444);transform-origin:0.00px 0;">MinimapRenderTexture</div>
<svg style="left:3001px;top:1213px;" width="20" height="20" viewBox="0 0 20 20"><circle cx="10" cy="10" r="8.5" fill="none" stroke="#c4c4c4" stroke-width="2"/><circle cx="10" cy="10" r="3.5" fill="#c4c4c4"/></svg>
<div class="t" style="left:2249.0px;top:1250.2px;font-size:24px;color:#c4c4c4;transform:scaleX(1.0458);transform-origin:0.00px 0;">Target Eye</div>
<div class="a" style="left:2545.8px;top:1246.4px;width:483.2px;height:32.0px;background:#515151;border-radius:4px;border-bottom:1px solid #2a2a2a"></div>
<div class="t" style="left:2553.0px;top:1251.0px;font-size:24px;color:#d2d2d2;transform:scaleX(1.0355);transform-origin:0.00px 0;">Both</div>
<svg style="left:3003.0px;top:1257.65px;" width="15" height="9.5" viewBox="0 0 15 9.5"><path d="M0 0 H15 L7.5 9.5 Z" fill="#c8c8c8"/></svg>
<div class="t" style="left:2249.0px;top:1290.9px;font-size:24px;color:#c4c4c4;transform:scaleX(1.0738);transform-origin:0.00px 0;">Viewport Rect</div>
<div class="t" style="left:2546.0px;top:1290.9px;font-size:24px;color:#c4c4c4;">X</div>
<div class="a" style="left:2576.0px;top:1284.8px;width:124.0px;height:34.0px;background:#2a2a2a;border-radius:4px;border:1px solid #212121;border-top-color:#1a1a1a"></div>
<div class="t" style="left:2582.0px;top:1290.4px;font-size:24px;color:#d2d2d2;">0</div>
<div class="t" style="left:2711.5px;top:1290.9px;font-size:24px;color:#c4c4c4;">Y</div>
<div class="a" style="left:2740.5px;top:1284.8px;width:124.5px;height:34.0px;background:#2a2a2a;border-radius:4px;border:1px solid #212121;border-top-color:#1a1a1a"></div>
<div class="t" style="left:2746.5px;top:1290.4px;font-size:24px;color:#d2d2d2;">0</div>
<div class="t" style="left:2546.0px;top:1330.6px;font-size:24px;color:#c4c4c4;">W</div>
<div class="a" style="left:2576.0px;top:1324.8px;width:124.0px;height:34.0px;background:#2a2a2a;border-radius:4px;border:1px solid #212121;border-top-color:#1a1a1a"></div>
<div class="t" style="left:2582.0px;top:1330.4px;font-size:24px;color:#d2d2d2;">1</div>
<div class="t" style="left:2711.5px;top:1330.6px;font-size:24px;color:#c4c4c4;">H</div>
<div class="a" style="left:2740.5px;top:1324.8px;width:124.5px;height:34.0px;background:#2a2a2a;border-radius:4px;border:1px solid #212121;border-top-color:#1a1a1a"></div>
<div class="t" style="left:2746.5px;top:1330.4px;font-size:24px;color:#d2d2d2;">1</div>
</div>
<div class="a" style="left:3046.0px;top:244.0px;width:26.0px;height:1091.0px;background:#2e2e2e;"></div>
<svg style="left:3051px;top:253px;" width="16" height="10" viewBox="0 0 16 10"><path d="M0 10 L8 0 L16 10 Z" fill="#c4c4c4"/></svg>
<div class="a" style="left:3050.0px;top:458.0px;width:18.0px;height:709.0px;background:#5e5e5e;border-radius:9px;"></div>
<svg style="left:3051px;top:1317px;" width="16" height="10" viewBox="0 0 16 10"><path d="M0 0 L8 10 L16 0 Z" fill="#c4c4c4"/></svg>
<div class="a" style="left:2174.0px;top:1335.0px;width:898.0px;height:2.0px;background:#222222;"></div>
<div class="a" style="left:2174.0px;top:1337.0px;width:898.0px;height:52.0px;background:#3c3c3c;"></div>
<div class="t" style="left:2183.0px;top:1350.4px;font-size:24px;color:#c4c4c4;font-weight:bold;transform:scaleX(0.9932);transform-origin:0.00px 0;">Asset Labels</div>
<div class="a" style="left:2174.0px;top:1389.0px;width:898.0px;height:1.5px;background:#232323;"></div>
<div class="a" style="left:2174.0px;top:1390.5px;width:898.0px;height:11.0px;background:#363636;"></div>
<div class="a" style="left:0.0px;top:1070.0px;width:216.0px;height:48.0px;background:#3c3c3c;border-radius:7px 7px 0 0;"></div>
<svg style="left:19px;top:1085.7px;" width="22" height="17" viewBox="0 0 22 17"><rect x="0" y="0" width="3.2" height="3.2" fill="#c4c4c4"/><rect x="4" y="7" width="3.2" height="3.2" fill="#c4c4c4"/><rect x="4" y="13.5" width="3.2" height="3.2" fill="#c4c4c4"/><path d="M6 1.6 H22 M10 8.6 H22 M10 15.1 H22" stroke="#c4c4c4" stroke-width="2.6"/></svg>
<div class="t" style="left:51.0px;top:1083.6px;font-size:24px;color:#c4c4c4;transform:scaleX(1.0414);transform-origin:0.00px 0;">Hierarchy</div>
<svg style="left:235px;top:1079px;" width="32" height="31" viewBox="0 0 32 31"><path d="M16 0 L22 3.5 V10.5 L16 14 L10 10.5 V3.5 Z M8 15 L14 18.5 V25.5 L8 29 L2 25.5 V18.5 Z M24 15 L30 18.5 V25.5 L24 29 L18 25.5 V18.5 Z" fill="#c4c4c4" stroke="#c4c4c4" stroke-width="2" stroke-linejoin="round"/></svg>
<div class="t" style="left:276.0px;top:1083.6px;font-size:24px;color:#c4c4c4;transform:scaleX(1.0479);transform-origin:0.00px 0;">Entities Hierarchy</div>
<svg style="left:643px;top:1084px;" width="18" height="22" viewBox="0 0 18 22"><path d="M2.6 4.2 Q4.6 1.1 8 1.1 A4.7 4.7 0 0 1 12.7 5.8 V10.5" fill="none" stroke="#c4c4c4" stroke-width="2.2"/><rect x="1.1" y="11.1" width="14.8" height="9.2" rx="0.8" fill="none" stroke="#c4c4c4" stroke-width="2.2"/></svg>
<svg style="left:681px;top:1082px;" width="8" height="24" viewBox="0 0 8 24"><circle cx="4" cy="4.6" r="2.6" fill="#c4c4c4"/><circle cx="4" cy="12" r="2.6" fill="#c4c4c4"/><circle cx="4" cy="19.4" r="2.6" fill="#c4c4c4"/></svg>
<div class="a" style="left:0.0px;top:1117.7px;width:711.0px;height:40.3px;background:#3c3c3c;"></div>
<div class="a" style="left:14.0px;top:1136.5px;width:24.0px;height:3.2px;background:#c4c4c4;"></div>
<div class="a" style="left:24.4px;top:1126.0px;width:3.2px;height:24.0px;background:#c4c4c4;"></div>
<svg style="left:47.0px;top:1133.9px;" width="14" height="9" viewBox="0 0 14 9"><path d="M0 0 H14 L7.0 9 Z" fill="#c4c4c4"/></svg>
<div class="a" style="left:86.6px;top:1122.3px;width:619.0px;height:31.0px;background:#2a2a2a;border-radius:6px;border:1px solid #1f1f1f;border-top:2px solid #151515"></div>
<svg style="left:96px;top:1132px;" width="19" height="15" viewBox="0 0 19 15"><circle cx="5.5" cy="5.5" r="4.2" fill="none" stroke="#c4c4c4" stroke-width="2.2"/><path d="M8.5 8.5 L13 13" stroke="#c4c4c4" stroke-width="2.6"/><path d="M12.5 2 H19 L15.75 6 Z" fill="#c4c4c4"/></svg>
<div class="t" style="left:124.8px;top:1125.6px;font-size:24px;color:#7a7a7a;transform:scaleX(0.8598);transform-origin:0.00px 0;">All</div>
<div class="a" style="left:675.0px;top:1123.5px;width:30.0px;height:29.0px;background:#2e2e2e;border-radius:0 5px 5px 0;"></div>
<svg style="left:678px;top:1126px;" width="24" height="24" viewBox="0 0 24 24"><rect x="6" y="1" width="17" height="17" fill="none" stroke="#c4c4c4" stroke-width="2"/><rect x="1" y="15" width="8" height="8" fill="#2a2a2a" stroke="#c4c4c4" stroke-width="2"/><path d="M10 14 L19 5 M12 5 H19 V12" fill="none" stroke="#c4c4c4" stroke-width="2"/></svg>
<div class="a" style="left:0.0px;top:1158.0px;width:683.0px;height:525.0px;background:#383838;"></div>
<div class="a" style="left:0.0px;top:1158.0px;width:64.0px;height:525.0px;background:#303030;"></div>
<div class="a" style="left:0.0px;top:1158.6px;width:683.0px;height:32.1px;background:#2c2c2c;"></div>
<div class="a" style="left:0.0px;top:1222.8px;width:683.0px;height:32.1px;background:#4a4a4a;"></div>
<div class="a" style="left:0.0px;top:1222.8px;width:64.0px;height:32.1px;background:#444444;"></div>
<div class="a" style="left:88.0px;top:1320.0px;width:594.0px;height:30.0px;background:#282828;"></div>
<div class="a" style="left:0;top:0;width:3072px;height:1683px;clip-path:inset(1158px 0 0 0)">
<svg style="left:68.14999999999999px;top:1167.6499999999999px;" width="17.3" height="15" viewBox="0 0 17.3 15"><path d="M0 0 H17.3 L8.65 15 Z" fill="#6e6e6e"/></svg>
<svg style="left:95.9px;top:1161.6499999999999px;" width="24.5" height="28.5" viewBox="0 0 24.5 28.5"><g transform="scale(1.0000,0.9965)"><path d="M12.25 0 L24.5 6.8 V19.6 L12.25 28.6 L0 19.6 V6.8 Z" fill="#e8e8e8"/><rect x="11.35" y="-0.5" width="1.8" height="5.6" fill="#2c2c2c"/><path d="M6.3 7.9 L12.25 4.9 L17.9 7.9 L12.25 11.2 Z" fill="#2c2c2c"/><path d="M4.4 11.5 L10.2 14.6 V22.4 L4.4 19.2 L0.2 21.6 V18.4 L4.4 16 Z" fill="#2c2c2c"/><path d="M20.1 11.5 L14.3 14.6 V22.4 L20.1 19.2 L24.3 21.6 V18.4 L20.1 16 Z" fill="#2c2c2c"/></g></svg>
<div class="t" style="left:130.7px;top:1162.6px;font-size:24px;color:#e4e4e4;font-weight:bold;transform:scaleX(1.0094);transform-origin:0.00px 0;">SharedGameScene</div>
<svg style="left:121.9px;top:1192.9499999999998px;" width="26" height="28.080000000000002" viewBox="0 0 26 28.080000000000002"><path d="M13.0 1.2 L24.8 7.300800000000001 V20.779200000000003 L13.0 26.880000000000003 L1.2 20.779200000000003 V7.300800000000001 Z M1.2 7.300800000000001 L13.0 14.601600000000001 L24.8 7.300800000000001 M13.0 14.601600000000001 V26.880000000000003" fill="none" stroke="#d2d2d2" stroke-width="2.0" stroke-linejoin="round"/></svg>
<div class="t" style="left:157.6px;top:1194.7px;font-size:24px;color:#d2d2d2;transform:scaleX(1.0177);transform-origin:0.00px 0;">Main Camera</div>
<svg style="left:121.9px;top:1225.05px;" width="26" height="28.080000000000002" viewBox="0 0 26 28.080000000000002"><path d="M13.0 1.2 L24.8 7.300800000000001 V20.779200000000003 L13.0 26.880000000000003 L1.2 20.779200000000003 V7.300800000000001 Z M1.2 7.300800000000001 L13.0 14.601600000000001 L24.8 7.300800000000001 M13.0 14.601600000000001 V26.880000000000003" fill="none" stroke="#d2d2d2" stroke-width="2.0" stroke-linejoin="round"/></svg>
<div class="t" style="left:157.6px;top:1226.8px;font-size:24px;color:#d2d2d2;transform:scaleX(1.0287);transform-origin:0.00px 0;">MinimapCamera</div>
<svg style="left:121.9px;top:1257.1499999999999px;" width="26" height="28.080000000000002" viewBox="0 0 26 28.080000000000002"><path d="M13.0 1.2 L24.8 7.300800000000001 V20.779200000000003 L13.0 26.880000000000003 L1.2 20.779200000000003 V7.300800000000001 Z M1.2 7.300800000000001 L13.0 14.601600000000001 L24.8 7.300800000000001 M13.0 14.601600000000001 V26.880000000000003" fill="none" stroke="#d2d2d2" stroke-width="2.0" stroke-linejoin="round"/></svg>
<div class="t" style="left:157.6px;top:1258.9px;font-size:24px;color:#d2d2d2;transform:scaleX(1.0581);transform-origin:0.00px 0;">Directional Light</div>
<svg style="left:121.9px;top:1289.25px;" width="26" height="28.080000000000002" viewBox="0 0 26 28.080000000000002"><path d="M13.0 1.2 L24.8 7.300800000000001 V20.779200000000003 L13.0 26.880000000000003 L1.2 20.779200000000003 V7.300800000000001 Z M1.2 7.300800000000001 L13.0 14.601600000000001 L24.8 7.300800000000001 M13.0 14.601600000000001 V26.880000000000003" fill="none" stroke="#d2d2d2" stroke-width="2.0" stroke-linejoin="round"/></svg>
<div class="t" style="left:157.6px;top:1291.0px;font-size:24px;color:#d2d2d2;transform:scaleX(1.0256);transform-origin:0.00px 0;">Global Volume</div>
<svg style="left:123px;top:1322.1499999999999px;" width="24.5" height="28.5" viewBox="0 0 24.5 28.5"><g transform="scale(1.0000,0.9965)"><path d="M12.25 0 L24.5 6.8 V19.6 L12.25 28.6 L0 19.6 V6.8 Z" fill="#e8e8e8"/><rect x="11.35" y="-0.5" width="1.8" height="5.6" fill="#282828"/><path d="M6.3 7.9 L12.25 4.9 L17.9 7.9 L12.25 11.2 Z" fill="#282828"/><path d="M4.4 11.5 L10.2 14.6 V22.4 L4.4 19.2 L0.2 21.6 V18.4 L4.4 16 Z" fill="#282828"/><path d="M20.1 11.5 L14.3 14.6 V22.4 L20.1 19.2 L24.3 21.6 V18.4 L20.1 16 Z" fill="#282828"/></g></svg>
<div class="t" style="left:157.6px;top:1323.1px;font-size:24px;color:#e4e4e4;transform:scaleX(1.0407);transform-origin:0.00px 0;">New Sub Scene</div>
<svg style="left:95.94999999999999px;top:1360.2499999999998px;" width="17.3" height="15" viewBox="0 0 17.3 15"><path d="M0 0 H17.3 L8.65 15 Z" fill="#6e6e6e"/></svg>
<svg style="left:121.9px;top:1353.4499999999998px;" width="26" height="28.080000000000002" viewBox="0 0 26 28.080000000000002"><path d="M13.0 1.2 L24.8 7.300800000000001 V20.779200000000003 L13.0 26.880000000000003 L1.2 20.779200000000003 V7.300800000000001 Z M1.2 7.300800000000001 L13.0 14.601600000000001 L24.8 7.300800000000001 M13.0 14.601600000000001 V26.880000000000003" fill="none" stroke="#d2d2d2" stroke-width="2.0" stroke-linejoin="round"/></svg>
<div class="t" style="left:157.6px;top:1355.2px;font-size:24px;color:#d2d2d2;transform:scaleX(1.0061);transform-origin:0.00px 0;">Canvas</div>
<svg style="left:125.80000000000001px;top:1390.85px;" width="15.2" height="17" viewBox="0 0 15.2 17"><path d="M0 0 V17 L15.2 8.5 Z" fill="#6e6e6e"/></svg>
<svg style="left:149.5px;top:1385.55px;" width="26" height="28.080000000000002" viewBox="0 0 26 28.080000000000002"><path d="M13.0 1.2 L24.8 7.300800000000001 V20.779200000000003 L13.0 26.880000000000003 L1.2 20.779200000000003 V7.300800000000001 Z M1.2 7.300800000000001 L13.0 14.601600000000001 L24.8 7.300800000000001 M13.0 14.601600000000001 V26.880000000000003" fill="none" stroke="#7e7e7e" stroke-width="2.0" stroke-linejoin="round"/></svg>
<div class="t" style="left:184.5px;top:1387.3px;font-size:24px;color:#7e7e7e;transform:scaleX(1.0126);transform-origin:0.00px 0;">GameOverPanel</div>
<svg style="left:125.80000000000001px;top:1422.9499999999998px;" width="15.2" height="17" viewBox="0 0 15.2 17"><path d="M0 0 V17 L15.2 8.5 Z" fill="#6e6e6e"/></svg>
<svg style="left:149.5px;top:1417.6499999999999px;" width="26" height="28.080000000000002" viewBox="0 0 26 28.080000000000002"><path d="M13.0 1.2 L24.8 7.300800000000001 V20.779200000000003 L13.0 26.880000000000003 L1.2 20.779200000000003 V7.300800000000001 Z M1.2 7.300800000000001 L13.0 14.601600000000001 L24.8 7.300800000000001 M13.0 14.601600000000001 V26.880000000000003" fill="none" stroke="#7e7e7e" stroke-width="2.0" stroke-linejoin="round"/></svg>
<div class="t" style="left:184.5px;top:1419.4px;font-size:24px;color:#7e7e7e;transform:scaleX(1.0363);transform-origin:0.00px 0;">GameVictoryPanel</div>
<svg style="left:149.5px;top:1449.75px;" width="26" height="28.080000000000002" viewBox="0 0 26 28.080000000000002"><path d="M13.0 1.2 L24.8 7.300800000000001 V20.779200000000003 L13.0 26.880000000000003 L1.2 20.779200000000003 V7.300800000000001 Z M1.2 7.300800000000001 L13.0 14.601600000000001 L24.8 7.300800000000001 M13.0 14.601600000000001 V26.880000000000003" fill="none" stroke="#d2d2d2" stroke-width="2.0" stroke-linejoin="round"/></svg>
<div class="t" style="left:184.5px;top:1451.5px;font-size:24px;color:#d2d2d2;transform:scaleX(1.0476);transform-origin:0.00px 0;">MinmapBorder</div>
<svg style="left:149.5px;top:1481.85px;" width="26" height="28.080000000000002" viewBox="0 0 26 28.080000000000002"><path d="M13.0 1.2 L24.8 7.300800000000001 V20.779200000000003 L13.0 26.880000000000003 L1.2 20.779200000000003 V7.300800000000001 Z M1.2 7.300800000000001 L13.0 14.601600000000001 L24.8 7.300800000000001 M13.0 14.601600000000001 V26.880000000000003" fill="none" stroke="#d2d2d2" stroke-width="2.0" stroke-linejoin="round"/></svg>
<div class="t" style="left:184.5px;top:1483.6px;font-size:24px;color:#d2d2d2;transform:scaleX(1.0444);transform-origin:0.00px 0;">MinimapRenderTexture</div>
<svg style="left:121.9px;top:1513.9499999999998px;" width="26" height="28.080000000000002" viewBox="0 0 26 28.080000000000002"><path d="M13.0 1.2 L24.8 7.300800000000001 V20.779200000000003 L13.0 26.880000000000003 L1.2 20.779200000000003 V7.300800000000001 Z M1.2 7.300800000000001 L13.0 14.601600000000001 L24.8 7.300800000000001 M13.0 14.601600000000001 V26.880000000000003" fill="none" stroke="#d2d2d2" stroke-width="2.0" stroke-linejoin="round"/></svg>
<div class="t" style="left:157.6px;top:1515.7px;font-size:24px;color:#d2d2d2;transform:scaleX(1.0318);transform-origin:0.00px 0;">EventSystem</div>
<svg style="left:121.9px;top:1546.05px;" width="26" height="28.080000000000002" viewBox="0 0 26 28.080000000000002"><path d="M13.0 1.2 L24.8 7.300800000000001 V20.779200000000003 L13.0 26.880000000000003 L1.2 20.779200000000003 V7.300800000000001 Z M1.2 7.300800000000001 L13.0 14.601600000000001 L24.8 7.300800000000001 M13.0 14.601600000000001 V26.880000000000003" fill="none" stroke="#d2d2d2" stroke-width="2.0" stroke-linejoin="round"/></svg>
<div class="t" style="left:157.6px;top:1547.8px;font-size:24px;color:#d2d2d2;transform:scaleX(1.0208);transform-origin:0.00px 0;">GamePlayUIPresenter</div>
<svg style="left:97.8px;top:1583.4499999999998px;" width="15.2" height="17" viewBox="0 0 15.2 17"><path d="M0 0 V17 L15.2 8.5 Z" fill="#6e6e6e"/></svg>
<svg style="left:121.9px;top:1578.1499999999999px;" width="26" height="28.080000000000002" viewBox="0 0 26 28.080000000000002"><path d="M13.0 1 L25 7.300800000000001 V20.779200000000003 L13.0 27.080000000000002 L1 20.779200000000003 V7.300800000000001 Z" fill="#4f7fa2"/><path d="M13.0 1 L25 7.300800000000001 L13.0 14.601600000000001 L1 7.300800000000001 Z" fill="#88aec8"/><path d="M13.0 14.601600000000001 L25 7.300800000000001 V20.779200000000003 L13.0 27.080000000000002 Z" fill="#5a8aa8"/></svg>
<div class="t" style="left:157.6px;top:1579.9px;font-size:24px;color:#4f7dbd;transform:scaleX(1.0469);transform-origin:0.00px 0;">LevelJungle</div>
<div class="a" style="left:63.7px;top:1578.9px;width:4.3px;height:28.1px;background:#1a8ad8;"></div>
<svg style="left:662px;top:1583.9499999999998px;" width="12" height="17" viewBox="0 0 12 17"><path d="M2 1.5 L10 8.5 L2 15.5" fill="none" stroke="#9a9a9a" stroke-width="2.4"/></svg>
<svg style="left:97.8px;top:1615.55px;" width="15.2" height="17" viewBox="0 0 15.2 17"><path d="M0 0 V17 L15.2 8.5 Z" fill="#6e6e6e"/></svg>
<svg style="left:121.9px;top:1610.25px;" width="26" height="28.080000000000002" viewBox="0 0 26 28.080000000000002"><path d="M13.0 1 L25 7.300800000000001 V20.779200000000003 L13.0 27.080000000000002 L1 20.779200000000003 V7.300800000000001 Z" fill="#4f7fa2"/><path d="M13.0 1 L25 7.300800000000001 L13.0 14.601600000000001 L1 7.300800000000001 Z" fill="#88aec8"/><path d="M13.0 14.601600000000001 L25 7.300800000000001 V20.779200000000003 L13.0 27.080000000000002 Z" fill="#5a8aa8"/></svg>
<div class="t" style="left:157.6px;top:1612.0px;font-size:24px;color:#4f7dbd;transform:scaleX(1.0374);transform-origin:0.00px 0;">TankShark</div>
<div class="a" style="left:63.7px;top:1611.0px;width:4.3px;height:28.1px;background:#1a8ad8;"></div>
<svg style="left:662px;top:1616.05px;" width="12" height="17" viewBox="0 0 12 17"><path d="M2 1.5 L10 8.5 L2 15.5" fill="none" stroke="#9a9a9a" stroke-width="2.4"/></svg>
<svg style="left:97.8px;top:1647.6499999999999px;" width="15.2" height="17" viewBox="0 0 15.2 17"><path d="M0 0 V17 L15.2 8.5 Z" fill="#6e6e6e"/></svg>
<svg style="left:121.9px;top:1642.35px;" width="26" height="28.080000000000002" viewBox="0 0 26 28.080000000000002"><path d="M13.0 1 L25 7.300800000000001 V20.779200000000003 L13.0 27.080000000000002 L1 20.779200000000003 V7.300800000000001 Z" fill="#4f7fa2"/><path d="M13.0 1 L25 7.300800000000001 L13.0 14.601600000000001 L1 7.300800000000001 Z" fill="#88aec8"/><path d="M13.0 14.601600000000001 L25 7.300800000000001 V20.779200000000003 L13.0 27.080000000000002 Z" fill="#5a8aa8"/></svg>
<div class="t" style="left:157.6px;top:1644.1px;font-size:24px;color:#4f7dbd;transform:scaleX(1.0384);transform-origin:0.00px 0;">TankRenderers</div>
<div class="a" style="left:63.7px;top:1643.1px;width:4.3px;height:28.1px;background:#1a8ad8;"></div>
<svg style="left:662px;top:1648.1499999999999px;" width="12" height="17" viewBox="0 0 12 17"><path d="M2 1.5 L10 8.5 L2 15.5" fill="none" stroke="#9a9a9a" stroke-width="2.4"/></svg>
<svg style="left:97.8px;top:1679.7499999999998px;" width="15.2" height="17" viewBox="0 0 15.2 17"><path d="M0 0 V17 L15.2 8.5 Z" fill="#6e6e6e"/></svg>
<svg style="left:121.9px;top:1674.4499999999998px;" width="26" height="28.080000000000002" viewBox="0 0 26 28.080000000000002"><path d="M13.0 1 L25 7.300800000000001 V20.779200000000003 L13.0 27.080000000000002 L1 20.779200000000003 V7.300800000000001 Z" fill="#4f7fa2"/><path d="M13.0 1 L25 7.300800000000001 L13.0 14.601600000000001 L1 7.300800000000001 Z" fill="#88aec8"/><path d="M13.0 14.601600000000001 L25 7.300800000000001 V20.779200000000003 L13.0 27.080000000000002 Z" fill="#5a8aa8"/></svg>
<div class="t" style="left:157.6px;top:1676.2px;font-size:24px;color:#4f7dbd;transform:scaleX(1.0288);transform-origin:0.00px 0;">TankSharkRenderers</div>
<div class="a" style="left:63.7px;top:1675.2px;width:4.3px;height:28.1px;background:#1a8ad8;"></div>
<svg style="left:662px;top:1680.2499999999998px;" width="12" height="17" viewBox="0 0 12 17"><path d="M2 1.5 L10 8.5 L2 15.5" fill="none" stroke="#9a9a9a" stroke-width="2.4"/></svg>
</div>
<svg style="left:655px;top:1162.4px;" width="8" height="24" viewBox="0 0 8 24"><circle cx="4" cy="4.6" r="2.6" fill="#c4c4c4"/><circle cx="4" cy="12" r="2.6" fill="#c4c4c4"/><circle cx="4" cy="19.4" r="2.6" fill="#c4c4c4"/></svg>
<div class="a" style="left:651.0px;top:1322.7px;width:27.0px;height:25.3px;background:#232323;border-radius:3px;border:1px solid #1c1c1c"></div>
<svg style="left:626px;top:1609px;" width="25" height="26" viewBox="0 0 25 26"><path d="M2 24 V12 A10.5 10.5 0 0 1 23 12 V24 L19.5 21 L16 24 L12.5 21 L9 24 L5.5 21 Z" fill="none" stroke="#e070e0" stroke-width="2.2" stroke-linejoin="round"/><circle cx="12.5" cy="9" r="2.2" fill="#e070e0"/><path d="M8 14 Q12.5 18 17 14" fill="none" stroke="#e070e0" stroke-width="2"/></svg>
<div class="a" style="left:683.0px;top:1158.0px;width:28.0px;height:525.0px;background:#343434;"></div>
<svg style="left:689px;top:1171px;" width="16" height="10" viewBox="0 0 16 10"><path d="M0 10 L8 0 L16 10 Z" fill="#c4c4c4"/></svg>
<div class="a" style="left:687.5px;top:1193.0px;width:19.5px;height:442.0px;background:#5e5e5e;border-radius:10px;"></div>
<svg style="left:689px;top:1663px;" width="16" height="10" viewBox="0 0 16 10"><path d="M0 0 L8 10 L16 0 Z" fill="#c4c4c4"/></svg>
<div class="a" style="left:711.0px;top:1117.0px;width:3.0px;height:566.0px;background:#191919;"></div>
<div class="a" style="left:714.0px;top:1070.0px;width:189.0px;height:48.0px;background:#3c3c3c;border-radius:7px 7px 0 0;"></div>
<svg style="left:733.5px;top:1086px;" width="24.5" height="19" viewBox="0 0 24.5 19"><path d="M0 1.5 Q0 0 1.5 0 H8.5 L11 3 H23.0 Q24.5 3 24.5 4.5 V17.5 Q24.5 19 23.0 19 H1.5 Q0 19 0 17.5 Z" fill="#c4c4c4"/></svg>
<div class="t" style="left:766.8px;top:1084.0px;font-size:24px;color:#c4c4c4;transform:scaleX(1.0462);transform-origin:0.00px 0;">Project</div>
<svg style="left:925.8px;top:1084px;" width="20" height="22" viewBox="0 0 20 22"><rect x="0" y="0" width="20" height="22" rx="1.5" fill="#c4c4c4"/><path d="M4 5 H16 M4 9 H16 M4 13 H16 M4 17 H12" stroke="#131313" stroke-width="1.6"/></svg>
<div class="t" style="left:956.0px;top:1084.0px;font-size:24px;color:#c4c4c4;transform:scaleX(1.0432);transform-origin:0.00px 0;">Console</div>
<svg style="left:1125.5px;top:1082px;" width="24" height="24" viewBox="0 0 24 24"><circle cx="12" cy="12" r="12" fill="#c4c4c4"/><path d="M12 4 V12.5 H18" fill="none" stroke="#131313" stroke-width="2.4"/></svg>
<div class="t" style="left:1159.0px;top:1084.0px;font-size:24px;color:#c4c4c4;transform:scaleX(1.0473);transform-origin:0.00px 0;">Animation</div>
<svg style="left:1352px;top:1085px;" width="21" height="18" viewBox="0 0 21 18"><path d="M1 1 Q8 2 11 9 M1 17 Q8 16 11 9 H19" fill="none" stroke="#c4c4c4" stroke-width="2.6"/><path d="M15 4.5 L20.5 9 L15 13.5" fill="none" stroke="#c4c4c4" stroke-width="2.4"/></svg>
<div class="t" style="left:1381.7px;top:1084.0px;font-size:24px;color:#c4c4c4;transform:scaleX(1.0510);transform-origin:0.00px 0;">Animator</div>
<svg style="left:1561.5px;top:1079px;" width="31" height="33" viewBox="0 0 31 33"><path d="M15.5 1.5 L28.5 9 V24 L15.5 31.5 L2.5 24 V9 Z" fill="none" stroke="#c4c4c4" stroke-width="2.4" stroke-dasharray="15 5" stroke-dashoffset="3"/><path d="M22 3 L26.5 7.5 L21 9 M9 30 L4.5 25.5 L10 24" fill="none" stroke="#c4c4c4" stroke-width="2.2"/></svg>
<div class="t" style="left:1600.0px;top:1084.0px;font-size:24px;color:#c4c4c4;transform:scaleX(1.0500);transform-origin:0.00px 0;">Systems</div>
<div class="t" style="left:1768.0px;top:1084.0px;font-size:24px;color:#c4c4c4;transform:scaleX(1.0509);transform-origin:0.00px 0;">PlayMode Tools</div>
<div class="t" style="left:2007.0px;top:1084.0px;font-size:24px;color:#c4c4c4;transform:scaleX(1.0443);transform-origin:0.00px 0;">Multi</div>
<div class="a" style="left:2062.4px;top:1070.0px;width:31.6px;height:46.0px;background:#2e2e2e;"></div>
<svg style="left:2073px;top:1085px;" width="10" height="16" viewBox="0 0 10 16"><path d="M0 0 V16 L10 8 Z" fill="#c4c4c4"/></svg>
<svg style="left:2101.5px;top:1084px;" width="18" height="22" viewBox="0 0 18 22"><path d="M2.6 4.2 Q4.6 1.1 8 1.1 A4.7 4.7 0 0 1 12.7 5.8 V10.5" fill="none" stroke="#c4c4c4" stroke-width="2.2"/><rect x="1.1" y="11.1" width="14.8" height="9.2" rx="0.8" fill="none" stroke="#c4c4c4" stroke-width="2.2"/></svg>
<svg style="left:2139.8px;top:1082px;" width="8" height="24" viewBox="0 0 8 24"><circle cx="4" cy="4.6" r="2.6" fill="#c4c4c4"/><circle cx="4" cy="12" r="2.6" fill="#c4c4c4"/><circle cx="4" cy="19.4" r="2.6" fill="#c4c4c4"/></svg>
<div class="a" style="left:714.0px;top:1117.7px;width:1456.0px;height:40.3px;background:#3c3c3c;"></div>
<div class="a" style="left:714.0px;top:1157.5px;width:1456.0px;height:2.0px;background:#262626;"></div>
<div class="a" style="left:728.0px;top:1136.5px;width:24.0px;height:3.2px;background:#c4c4c4;"></div>
<div class="a" style="left:738.4px;top:1126.0px;width:3.2px;height:24.0px;background:#c4c4c4;"></div>
<svg style="left:761.0px;top:1133.9px;" width="14" height="9" viewBox="0 0 14 9"><path d="M0 0 H14 L7.0 9 Z" fill="#c4c4c4"/></svg>
<div class="a" style="left:1288.7px;top:1122.0px;width:634.3px;height:31.7px;background:#2a2a2a;border-radius:6px;border:1px solid #1f1f1f;border-top:2px solid #151515"></div>
<svg style="left:1299px;top:1131.7px;" width="14" height="14" viewBox="0 0 14 14"><circle cx="5.5" cy="5.5" r="4.3" fill="none" stroke="#c4c4c4" stroke-width="2.2"/><path d="M8.6 8.6 L13 13" stroke="#c4c4c4" stroke-width="2.6"/></svg>
<div class="a" style="left:1889.7px;top:1123.5px;width:32.0px;height:29.0px;background:#2e2e2e;border-radius:0 5px 5px 0;"></div>
<svg style="left:1894px;top:1125.7px;" width="24" height="24" viewBox="0 0 24 24"><rect x="6" y="1" width="17" height="17" fill="none" stroke="#c4c4c4" stroke-width="2"/><rect x="1" y="15" width="8" height="8" fill="#2a2a2a" stroke="#c4c4c4" stroke-width="2"/><path d="M10 14 L19 5 M12 5 H19 V12" fill="none" stroke="#c4c4c4" stroke-width="2"/></svg>
<div class="a" style="left:1928.0px;top:1118.0px;width:2.0px;height:40.0px;background:#2a2a2a;"></div>
<div class="a" style="left:1979.6px;top:1118.0px;width:2.0px;height:40.0px;background:#2a2a2a;"></div>
<div class="a" style="left:2031.0px;top:1118.0px;width:2.0px;height:40.0px;background:#2a2a2a;"></div>
<div class="a" style="left:2083.0px;top:1118.0px;width:2.0px;height:40.0px;background:#2a2a2a;"></div>
<svg style="left:1943px;top:1125px;" width="24" height="26" viewBox="0 0 24 26"><rect x="4.5" y="0" width="10" height="10" fill="#c4c4c4"/><circle cx="7.5" cy="18" r="7.5" fill="#c4c4c4"/><path d="M16 6 L24 19 H13 Z" fill="#c4c4c4"/></svg>
<svg style="left:1994.6px;top:1129px;" width="20" height="19" viewBox="0 0 20 19"><path d="M11 0 H20 V9 L9 19 L0 10 Z" fill="#c4c4c4"/><circle cx="15.5" cy="4.5" r="1.8" fill="#3c3c3c"/></svg>
<svg style="left:2045px;top:1124px;" width="26" height="26" viewBox="0 0 26 26"><path d="M7.6 0 H18.4 L26 7.6 V18.4 L18.4 26 H7.6 L0 18.4 V7.6 Z" fill="#c4c4c4"/><rect x="11.2" y="5" width="3.6" height="11" rx="1.5" fill="#3c3c3c"/><circle cx="13" cy="20" r="2.2" fill="#3c3c3c"/></svg>
<svg style="left:2097.6px;top:1130px;" width="28" height="15" viewBox="0 0 28 15"><path d="M1 7.5 Q14 -6 27 7.5 Q14 21 1 7.5 Z" fill="none" stroke="#6a6a6a" stroke-width="2"/><circle cx="14" cy="6.5" r="4.8" fill="#6a6a6a"/></svg>
<div class="t" style="left:2131.9px;top:1126.3px;font-size:24px;color:#c4c4c4;transform:scaleX(1.0093);transform-origin:0.00px 0;">38</div>
<div class="a" style="left:714.0px;top:1159.5px;width:1456.0px;height:482.5px;background:#383838;"></div>
<div class="a" style="left:714.0px;top:1642.0px;width:1456.0px;height:41.0px;background:#414141;"></div>
<div class="a" style="left:0;top:0;width:3072px;height:1642px;clip-path:inset(1159.5px 0 0 0)">
<svg style="left:722.0px;top:1174.8px;" width="17.8" height="15.4" viewBox="0 0 17.8 15.4"><path d="M0 0 H17.8 L8.9 15.4 Z" fill="#6e6e6e"/></svg>
<svg style="left:750px;top:1172.0px;" width="27" height="20" viewBox="0 0 27 20"><path d="M1 19 V1.2 H8 L10.5 4 H21 V7.5" fill="none" stroke="#c4c4c4" stroke-width="2"/><path d="M1.5 20 L6 7.5 H27 L22.5 20 Z" fill="#c4c4c4"/></svg>
<div class="t" style="left:785.0px;top:1170.6px;font-size:24px;color:#e0e0e0;font-weight:bold;transform:scaleX(0.9930);transform-origin:0.00px 0;">Assets</div>
<svg style="left:752.0px;top:1205.3px;" width="15.8" height="17.5" viewBox="0 0 15.8 17.5"><path d="M0 0 V17.5 L15.8 8.75 Z" fill="#6e6e6e"/></svg>
<svg style="left:778px;top:1204.05px;" width="24" height="20" viewBox="0 0 24 20"><path d="M0 1.5 Q0 0 1.5 0 H8.5 L11 3 H22.5 Q24 3 24 4.5 V18.5 Q24 20 22.5 20 H1.5 Q0 20 0 18.5 Z" fill="#c4c4c4"/></svg>
<div class="t" style="left:810.7px;top:1202.6px;font-size:24px;color:#d2d2d2;transform:scaleX(1.0829);transform-origin:0.00px 0;">Art</div>
<svg style="left:752.0px;top:1237.35px;" width="15.8" height="17.5" viewBox="0 0 15.8 17.5"><path d="M0 0 V17.5 L15.8 8.75 Z" fill="#6e6e6e"/></svg>
<svg style="left:778px;top:1236.1px;" width="24" height="20" viewBox="0 0 24 20"><path d="M0 1.5 Q0 0 1.5 0 H8.5 L11 3 H22.5 Q24 3 24 4.5 V18.5 Q24 20 22.5 20 H1.5 Q0 20 0 18.5 Z" fill="#c4c4c4"/></svg>
<div class="t" style="left:810.7px;top:1234.7px;font-size:24px;color:#d2d2d2;transform:scaleX(1.0407);transform-origin:0.00px 0;">Audio</div>
<svg style="left:752.0px;top:1269.4px;" width="15.8" height="17.5" viewBox="0 0 15.8 17.5"><path d="M0 0 V17.5 L15.8 8.75 Z" fill="#6e6e6e"/></svg>
<svg style="left:778px;top:1268.15px;" width="24" height="20" viewBox="0 0 24 20"><path d="M0 1.5 Q0 0 1.5 0 H8.5 L11 3 H22.5 Q24 3 24 4.5 V18.5 Q24 20 22.5 20 H1.5 Q0 20 0 18.5 Z" fill="#c4c4c4"/></svg>
<div class="t" style="left:810.7px;top:1266.8px;font-size:24px;color:#d2d2d2;transform:scaleX(1.0514);transform-origin:0.00px 0;">GlobalEntitiesDependencies</div>
<svg style="left:752.0px;top:1301.45px;" width="15.8" height="17.5" viewBox="0 0 15.8 17.5"><path d="M0 0 V17.5 L15.8 8.75 Z" fill="#6e6e6e"/></svg>
<svg style="left:778px;top:1300.2px;" width="24" height="20" viewBox="0 0 24 20"><path d="M0 1.5 Q0 0 1.5 0 H8.5 L11 3 H22.5 Q24 3 24 4.5 V18.5 Q24 20 22.5 20 H1.5 Q0 20 0 18.5 Z" fill="#c4c4c4"/></svg>
<div class="t" style="left:810.7px;top:1298.8px;font-size:24px;color:#d2d2d2;transform:scaleX(1.0591);transform-origin:0.00px 0;">Materials</div>
<svg style="left:752.0px;top:1333.5px;" width="15.8" height="17.5" viewBox="0 0 15.8 17.5"><path d="M0 0 V17.5 L15.8 8.75 Z" fill="#6e6e6e"/></svg>
<svg style="left:778px;top:1332.25px;" width="24" height="20" viewBox="0 0 24 20"><path d="M0 1.5 Q0 0 1.5 0 H8.5 L11 3 H22.5 Q24 3 24 4.5 V18.5 Q24 20 22.5 20 H1.5 Q0 20 0 18.5 Z" fill="#c4c4c4"/></svg>
<div class="t" style="left:810.7px;top:1330.8px;font-size:24px;color:#d2d2d2;transform:scaleX(1.0615);transform-origin:0.00px 0;">Models</div>
<svg style="left:752.0px;top:1365.55px;" width="15.8" height="17.5" viewBox="0 0 15.8 17.5"><path d="M0 0 V17.5 L15.8 8.75 Z" fill="#6e6e6e"/></svg>
<svg style="left:778px;top:1364.3px;" width="24" height="20" viewBox="0 0 24 20"><path d="M0 1.5 Q0 0 1.5 0 H8.5 L11 3 H22.5 Q24 3 24 4.5 V18.5 Q24 20 22.5 20 H1.5 Q0 20 0 18.5 Z" fill="#c4c4c4"/></svg>
<div class="t" style="left:810.7px;top:1362.9px;font-size:24px;color:#d2d2d2;transform:scaleX(1.0393);transform-origin:0.00px 0;">Prefabs</div>
<svg style="left:752.0px;top:1399.1499999999999px;" width="17.8" height="15.4" viewBox="0 0 17.8 15.4"><path d="M0 0 H17.8 L8.9 15.4 Z" fill="#6e6e6e"/></svg>
<svg style="left:778px;top:1396.35px;" width="27" height="20" viewBox="0 0 27 20"><path d="M1 19 V1.2 H8 L10.5 4 H21 V7.5" fill="none" stroke="#c4c4c4" stroke-width="2"/><path d="M1.5 20 L6 7.5 H27 L22.5 20 Z" fill="#c4c4c4"/></svg>
<div class="t" style="left:810.7px;top:1394.9px;font-size:24px;color:#d2d2d2;transform:scaleX(1.0196);transform-origin:0.00px 0;">Resources</div>
<svg style="left:779.0px;top:1431.2px;" width="17.8" height="15.4" viewBox="0 0 17.8 15.4"><path d="M0 0 H17.8 L8.9 15.4 Z" fill="#6e6e6e"/></svg>
<svg style="left:805.6px;top:1428.4px;" width="27" height="20" viewBox="0 0 27 20"><path d="M1 19 V1.2 H8 L10.5 4 H21 V7.5" fill="none" stroke="#c4c4c4" stroke-width="2"/><path d="M1.5 20 L6 7.5 H27 L22.5 20 Z" fill="#c4c4c4"/></svg>
<div class="t" style="left:838.8px;top:1427.0px;font-size:24px;color:#d2d2d2;transform:scaleX(1.0689);transform-origin:0.00px 0;">Textures</div>
<svg style="left:834px;top:1457.45px;" width="26" height="26" viewBox="0 0 26 26"><path d="M1 22 V1 H25 V10" fill="none" stroke="#5ab8e8" stroke-width="2"/><path d="M1 20 V25 H5" fill="none" stroke="#5ab8e8" stroke-width="2"/><path d="M5 5 h4 v4 h-4 z M13 5 h4 v4 h-4 z M9 9 h4 v4 h-4 z M17 9 h4 v4 h-4 z M5 13 h4 v3 h-4 z" fill="#c4c4c4"/><path d="M6 19 Q15.5 8 25 19 Q15.5 30 6 19 Z" fill="#c4c4c4" stroke="#383838" stroke-width="1.5"/><circle cx="15.5" cy="19" r="3.2" fill="#383838"/></svg>
<div class="t" style="left:866.8px;top:1459.0px;font-size:24px;color:#d2d2d2;transform:scaleX(1.0444);transform-origin:0.00px 0;">MinimapRenderTexture</div>
<svg style="left:752.0px;top:1493.75px;" width="15.8" height="17.5" viewBox="0 0 15.8 17.5"><path d="M0 0 V17.5 L15.8 8.75 Z" fill="#6e6e6e"/></svg>
<svg style="left:778px;top:1492.5px;" width="24" height="20" viewBox="0 0 24 20"><path d="M0 1.5 Q0 0 1.5 0 H8.5 L11 3 H22.5 Q24 3 24 4.5 V18.5 Q24 20 22.5 20 H1.5 Q0 20 0 18.5 Z" fill="#c4c4c4"/></svg>
<div class="t" style="left:810.7px;top:1491.1px;font-size:24px;color:#d2d2d2;transform:scaleX(1.0505);transform-origin:0.00px 0;">SceneDependencyCache</div>
<svg style="left:752.0px;top:1527.35px;" width="17.8" height="15.4" viewBox="0 0 17.8 15.4"><path d="M0 0 H17.8 L8.9 15.4 Z" fill="#6e6e6e"/></svg>
<svg style="left:778px;top:1524.55px;" width="27" height="20" viewBox="0 0 27 20"><path d="M1 19 V1.2 H8 L10.5 4 H21 V7.5" fill="none" stroke="#c4c4c4" stroke-width="2"/><path d="M1.5 20 L6 7.5 H27 L22.5 20 Z" fill="#c4c4c4"/></svg>
<div class="t" style="left:810.7px;top:1523.1px;font-size:24px;color:#d2d2d2;transform:scaleX(1.0250);transform-origin:0.00px 0;">Scenes</div>
<svg style="left:779.0px;top:1557.85px;" width="15.8" height="17.5" viewBox="0 0 15.8 17.5"><path d="M0 0 V17.5 L15.8 8.75 Z" fill="#6e6e6e"/></svg>
<svg style="left:805.6px;top:1556.6px;" width="24" height="20" viewBox="0 0 24 20"><path d="M0 1.5 Q0 0 1.5 0 H8.5 L11 3 H22.5 Q24 3 24 4.5 V18.5 Q24 20 22.5 20 H1.5 Q0 20 0 18.5 Z" fill="#c4c4c4"/></svg>
<div class="t" style="left:838.8px;top:1555.2px;font-size:24px;color:#d2d2d2;transform:scaleX(1.0501);transform-origin:0.00px 0;">ClientLoungeScene</div>
<svg style="left:779.0px;top:1589.9px;" width="15.8" height="17.5" viewBox="0 0 15.8 17.5"><path d="M0 0 V17.5 L15.8 8.75 Z" fill="#6e6e6e"/></svg>
<svg style="left:805.6px;top:1588.65px;" width="24" height="20" viewBox="0 0 24 20"><path d="M0 1.5 Q0 0 1.5 0 H8.5 L11 3 H22.5 Q24 3 24 4.5 V18.5 Q24 20 22.5 20 H1.5 Q0 20 0 18.5 Z" fill="#c4c4c4"/></svg>
<div class="t" style="left:838.8px;top:1587.2px;font-size:24px;color:#d2d2d2;transform:scaleX(1.0487);transform-origin:0.00px 0;">LobbyScene</div>
<svg style="left:779.0px;top:1621.9499999999998px;" width="15.8" height="17.5" viewBox="0 0 15.8 17.5"><path d="M0 0 V17.5 L15.8 8.75 Z" fill="#6e6e6e"/></svg>
<svg style="left:805.6px;top:1620.6999999999998px;" width="24" height="20" viewBox="0 0 24 20"><path d="M0 1.5 Q0 0 1.5 0 H8.5 L11 3 H22.5 Q24 3 24 4.5 V18.5 Q24 20 22.5 20 H1.5 Q0 20 0 18.5 Z" fill="#c4c4c4"/></svg>
<div class="t" style="left:838.8px;top:1619.3px;font-size:24px;color:#d2d2d2;transform:scaleX(1.0234);transform-origin:0.00px 0;">SampleScene</div>
</div>
<div class="a" style="left:2142.0px;top:1159.5px;width:28.0px;height:482.5px;background:#343434;"></div>
<svg style="left:2149px;top:1172px;" width="15" height="9" viewBox="0 0 15 9"><path d="M0 9 L7.5 0 L15 9 Z" fill="#c4c4c4"/></svg>
<div class="a" style="left:2145.0px;top:1192.0px;width:21.0px;height:82.0px;background:#5e5e5e;border-radius:10px;"></div>
<svg style="left:2149px;top:1625px;" width="15" height="9" viewBox="0 0 15 9"><path d="M0 0 L7.5 9 L15 0 Z" fill="#c4c4c4"/></svg>
<div class="a" style="left:2170.0px;top:1117.0px;width:4.0px;height:566.0px;background:#191919;"></div>
<div class="a" style="left:2174.0px;top:1406.0px;width:190.0px;height:48.0px;background:#3c3c3c;border-radius:7px 7px 0 0;"></div>
<svg style="left:2193.5px;top:1421px;" width="24.5" height="19" viewBox="0 0 24.5 19"><path d="M0 1.5 Q0 0 1.5 0 H8.5 L11 3 H23.0 Q24.5 3 24.5 4.5 V17.5 Q24.5 19 23.0 19 H1.5 Q0 19 0 17.5 Z" fill="#c4c4c4"/></svg>
<div class="t" style="left:2226.5px;top:1419.1px;font-size:24px;color:#c4c4c4;transform:scaleX(1.0462);transform-origin:0.00px 0;">Project</div>
<svg style="left:3000px;top:1420px;" width="18" height="24" viewBox="0 0 18 24"><path d="M4 11 V7 A5 5 0 0 1 14 7 V11" fill="none" stroke="#c4c4c4" stroke-width="2.6"/><rect x="0" y="10" width="18" height="13" rx="2" fill="#c4c4c4"/></svg>
<svg style="left:3039px;top:1419px;" width="8" height="24" viewBox="0 0 8 24"><circle cx="4" cy="4.6" r="2.6" fill="#c4c4c4"/><circle cx="4" cy="12" r="2.6" fill="#c4c4c4"/><circle cx="4" cy="19.4" r="2.6" fill="#c4c4c4"/></svg>
<div class="a" style="left:2174.0px;top:1454.0px;width:898.0px;height:41.0px;background:#3c3c3c;"></div>
<div class="a" style="left:2174.0px;top:1493.5px;width:898.0px;height:2.0px;background:#262626;"></div>
<div class="a" style="left:2188.0px;top:1472.0px;width:24.0px;height:3.2px;background:#c4c4c4;"></div>
<div class="a" style="left:2198.4px;top:1461.5px;width:3.2px;height:24.0px;background:#c4c4c4;"></div>
<svg style="left:2221.0px;top:1469.5px;" width="14" height="9" viewBox="0 0 14 9"><path d="M0 0 H14 L7.0 9 Z" fill="#c4c4c4"/></svg>
<div class="a" style="left:2265.0px;top:1458.0px;width:557.6px;height:31.0px;background:#2a2a2a;border-radius:6px;border:1px solid #1f1f1f;border-top:2px solid #151515"></div>
<svg style="left:2274px;top:1467.5px;" width="14" height="14" viewBox="0 0 14 14"><circle cx="5.5" cy="5.5" r="4.3" fill="none" stroke="#c4c4c4" stroke-width="2.2"/><path d="M8.6 8.6 L13 13" stroke="#c4c4c4" stroke-width="2.6"/></svg>
<div class="a" style="left:2789.6px;top:1459.5px;width:32.0px;height:28.0px;background:#2e2e2e;border-radius:0 5px 5px 0;"></div>
<svg style="left:2794px;top:1461.5px;" width="24" height="24" viewBox="0 0 24 24"><rect x="6" y="1" width="17" height="17" fill="none" stroke="#c4c4c4" stroke-width="2"/><rect x="1" y="15" width="8" height="8" fill="#2a2a2a" stroke="#c4c4c4" stroke-width="2"/><path d="M10 14 L19 5 M12 5 H19 V12" fill="none" stroke="#c4c4c4" stroke-width="2"/></svg>
<div class="a" style="left:2828.0px;top:1454.0px;width:2.0px;height:40.0px;background:#2a2a2a;"></div>
<div class="a" style="left:2879.6px;top:1454.0px;width:2.0px;height:40.0px;background:#2a2a2a;"></div>
<div class="a" style="left:2931.0px;top:1454.0px;width:2.0px;height:40.0px;background:#2a2a2a;"></div>
<div class="a" style="left:2983.0px;top:1454.0px;width:2.0px;height:40.0px;background:#2a2a2a;"></div>
<svg style="left:2843px;top:1461px;" width="24" height="26" viewBox="0 0 24 26"><rect x="4.5" y="0" width="10" height="10" fill="#c4c4c4"/><circle cx="7.5" cy="18" r="7.5" fill="#c4c4c4"/><path d="M16 6 L24 19 H13 Z" fill="#c4c4c4"/></svg>
<svg style="left:2894.6px;top:1465px;" width="20" height="19" viewBox="0 0 20 19"><path d="M11 0 H20 V9 L9 19 L0 10 Z" fill="#c4c4c4"/><circle cx="15.5" cy="4.5" r="1.8" fill="#3c3c3c"/></svg>
<svg style="left:2945px;top:1460px;" width="26" height="26" viewBox="0 0 26 26"><path d="M7.6 0 H18.4 L26 7.6 V18.4 L18.4 26 H7.6 L0 18.4 V7.6 Z" fill="#c4c4c4"/><rect x="11.2" y="5" width="3.6" height="11" rx="1.5" fill="#3c3c3c"/><circle cx="13" cy="20" r="2.2" fill="#3c3c3c"/></svg>
<svg style="left:2997.6px;top:1466px;" width="28" height="15" viewBox="0 0 28 15"><path d="M1 7.5 Q14 -6 27 7.5 Q14 21 1 7.5 Z" fill="none" stroke="#6a6a6a" stroke-width="2"/><circle cx="14" cy="6.5" r="4.8" fill="#6a6a6a"/></svg>
<div class="t" style="left:3032.0px;top:1462.1px;font-size:24px;color:#c4c4c4;transform:scaleX(1.0093);transform-origin:0.00px 0;">38</div>
<div class="a" style="left:2174.0px;top:1495.5px;width:898.0px;height:146.5px;background:#383838;"></div>
<div class="a" style="left:2174.0px;top:1642.0px;width:898.0px;height:41.0px;background:#414141;"></div>
<div class="a" style="left:0;top:0;width:3072px;height:1642px;clip-path:inset(1495.5px 0 0 0)">
<svg style="left:2240.0px;top:1502.75px;" width="15.8" height="17.5" viewBox="0 0 15.8 17.5"><path d="M0 0 V17.5 L15.8 8.75 Z" fill="#6e6e6e"/></svg>
<svg style="left:2265.5px;top:1501.5px;" width="24" height="20" viewBox="0 0 24 20"><path d="M0 1.5 Q0 0 1.5 0 H8.5 L11 3 H22.5 Q24 3 24 4.5 V18.5 Q24 20 22.5 20 H1.5 Q0 20 0 18.5 Z" fill="#c4c4c4"/></svg>
<div class="t" style="left:2299.0px;top:1500.1px;font-size:24px;color:#d2d2d2;transform:scaleX(1.0487);transform-origin:0.00px 0;">LobbyScene</div>
<svg style="left:2240.0px;top:1534.75px;" width="15.8" height="17.5" viewBox="0 0 15.8 17.5"><path d="M0 0 V17.5 L15.8 8.75 Z" fill="#6e6e6e"/></svg>
<svg style="left:2265.5px;top:1533.5px;" width="24" height="20" viewBox="0 0 24 20"><path d="M0 1.5 Q0 0 1.5 0 H8.5 L11 3 H22.5 Q24 3 24 4.5 V18.5 Q24 20 22.5 20 H1.5 Q0 20 0 18.5 Z" fill="#c4c4c4"/></svg>
<div class="t" style="left:2299.0px;top:1532.1px;font-size:24px;color:#d2d2d2;transform:scaleX(1.0234);transform-origin:0.00px 0;">SampleScene</div>
<svg style="left:2240.0px;top:1566.75px;" width="15.8" height="17.5" viewBox="0 0 15.8 17.5"><path d="M0 0 V17.5 L15.8 8.75 Z" fill="#6e6e6e"/></svg>
<svg style="left:2265.5px;top:1565.5px;" width="24" height="20" viewBox="0 0 24 20"><path d="M0 1.5 Q0 0 1.5 0 H8.5 L11 3 H22.5 Q24 3 24 4.5 V18.5 Q24 20 22.5 20 H1.5 Q0 20 0 18.5 Z" fill="#c4c4c4"/></svg>
<div class="t" style="left:2299.0px;top:1564.1px;font-size:24px;color:#d2d2d2;transform:scaleX(1.0526);transform-origin:0.00px 0;">ServerEntryScene</div>
<svg style="left:2240.0px;top:1598.75px;" width="15.8" height="17.5" viewBox="0 0 15.8 17.5"><path d="M0 0 V17.5 L15.8 8.75 Z" fill="#6e6e6e"/></svg>
<svg style="left:2265.5px;top:1597.5px;" width="24" height="20" viewBox="0 0 24 20"><path d="M0 1.5 Q0 0 1.5 0 H8.5 L11 3 H22.5 Q24 3 24 4.5 V18.5 Q24 20 22.5 20 H1.5 Q0 20 0 18.5 Z" fill="#c4c4c4"/></svg>
<div class="t" style="left:2299.0px;top:1596.1px;font-size:24px;color:#d2d2d2;transform:scaleX(1.0514);transform-origin:0.00px 0;">ServerLoungeScene</div>
<svg style="left:2266px;top:1626.5px;" width="24.5" height="28.5" viewBox="0 0 24.5 28.5"><g transform="scale(1.0000,0.9965)"><path d="M12.25 0 L24.5 6.8 V19.6 L12.25 28.6 L0 19.6 V6.8 Z" fill="#e4e4e4"/><rect x="11.35" y="-0.5" width="1.8" height="5.6" fill="#383838"/><path d="M6.3 7.9 L12.25 4.9 L17.9 7.9 L12.25 11.2 Z" fill="#383838"/><path d="M4.4 11.5 L10.2 14.6 V22.4 L4.4 19.2 L0.2 21.6 V18.4 L4.4 16 Z" fill="#383838"/><path d="M20.1 11.5 L14.3 14.6 V22.4 L20.1 19.2 L24.3 21.6 V18.4 L20.1 16 Z" fill="#383838"/></g></svg>
<div class="t" style="left:2299.0px;top:1628.1px;font-size:24px;color:#d2d2d2;transform:scaleX(1.0566);transform-origin:0.00px 0;">ClientEntryScene</div>
</div>
<div class="a" style="left:3046.0px;top:1495.5px;width:26.0px;height:146.5px;background:#343434;"></div>
<svg style="left:3051px;top:1507px;" width="15" height="9" viewBox="0 0 15 9"><path d="M0 9 L7.5 0 L15 9 Z" fill="#c4c4c4"/></svg>
<div class="a" style="left:3049.0px;top:1532.0px;width:20.0px;height:38.0px;background:#5e5e5e;border-radius:10px;"></div>
<svg style="left:3051px;top:1621px;" width="15" height="9" viewBox="0 0 15 9"><path d="M0 0 L7.5 9 L15 0 Z" fill="#c4c4c4"/></svg>
<svg style="left:2927px;top:1693px;" width="29" height="29" viewBox="0 0 29 29"><ellipse cx="14.5" cy="16" rx="8" ry="10" fill="#c4c4c4"/><path d="M9 2 L11.5 6 M20 2 L17.5 6 M1 12 L6 14 M28 12 L23 14 M1 19 H6 M28 19 H23 M2 27 L7 24 M27 27 L22 24" stroke="#c4c4c4" stroke-width="2"/><path d="M3 2 L27 28" stroke="#131313" stroke-width="4"/><path d="M3 2 L27 28" stroke="#c4c4c4" stroke-width="2"/></svg>
<svg style="left:2979px;top:1693px;" width="28" height="29" viewBox="0 0 28 29"><ellipse cx="14" cy="5" rx="11" ry="4.5" fill="#c4c4c4"/><path d="M3 9 Q14 15 25 9 V13 Q14 19 3 13 Z M3 16 Q14 22 25 16 V20 Q14 26 3 20 Z" fill="#c4c4c4"/><path d="M4 3 L26 28" stroke="#131313" stroke-width="4"/><path d="M4 3 L26 28" stroke="#c4c4c4" stroke-width="2"/></svg>
<svg style="left:3030px;top:1693px;" width="28" height="28" viewBox="0 0 28 28"><circle cx="14" cy="14" r="12.5" fill="none" stroke="#c4c4c4" stroke-width="2.4"/><path d="M8 14.5 L12.5 19 L20 10" fill="none" stroke="#c4c4c4" stroke-width="2.4"/></svg>
<div class="a" style="left:2916.0px;top:1686.0px;width:2.0px;height:40.0px;background:#222;"></div>
<div class="a" style="left:2967.0px;top:1686.0px;width:2.0px;height:40.0px;background:#222;"></div>
<div class="a" style="left:3019.0px;top:1686.0px;width:2.0px;height:40.0px;background:#222;"></div>
</body></html>
